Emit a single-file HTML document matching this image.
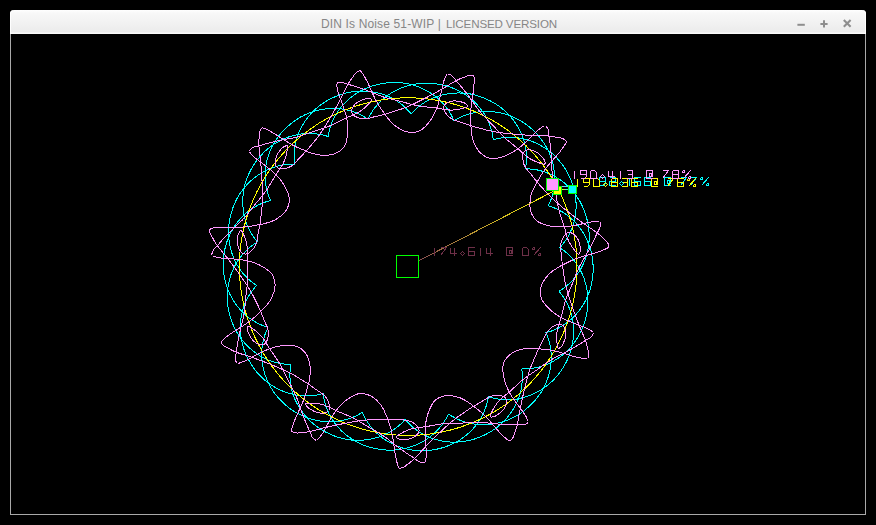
<!DOCTYPE html>
<html><head><meta charset="utf-8"><title>DIN Is Noise</title>
<style>
html,body{margin:0;padding:0;background:#000;}
body{width:876px;height:525px;position:relative;overflow:hidden;font-family:"Liberation Sans",sans-serif;}
#win{position:absolute;left:10px;top:10px;width:856px;height:505px;box-sizing:border-box;background:#000;border-radius:4px 4px 0 0;}
#tb{position:absolute;left:0;top:0;width:856px;height:24px;border-radius:4px 4px 0 0;box-shadow:inset 1px 0 0 #fff,inset -1px 0 0 #fff;background:linear-gradient(#ffffff 0px,#f8f8f8 3px,#ececec 21px,#ebebeb 22px,#fafafa 23px);}
#tt{position:absolute;left:311px;top:2px;height:24px;line-height:25px;font-size:12px;color:#868686;white-space:pre;}
#bd{position:absolute;left:0;top:24px;width:856px;height:481px;box-sizing:border-box;border:1px solid #a9a9a9;border-top:none;}
</style></head><body>
<div id="win"><div id="tb"></div><div id="tt"><span id="tts"><span style="position:absolute;left:0px;top:0;letter-spacing:0.14px">DIN Is Noise 51-WIP</span><span style="position:absolute;left:116.8px;top:0">|</span><span style="position:absolute;left:125.0px;top:-0.7px;font-size:11.6px;letter-spacing:-0.15px">LICENSED VERSION</span></span></div><div id="bd"></div></div>
<svg width="876" height="525" viewBox="0 0 876 525" style="position:absolute;left:0;top:0" shape-rendering="crispEdges" fill="none" stroke-width="1">
<g stroke="#00ffff"><path d="M411.1 113.9 L410.5 113.1 L409.8 112.3 L409.1 111.6 L408.5 110.8 L407.8 110.1 L407.1 109.4 L406.4 108.7 L405.7 108.0 L405.0 107.3 L404.3 106.7 L403.6 106.1 L402.9 105.4 L402.1 104.8 L401.4 104.3 L400.7 103.7 L399.9 103.1 L399.2 102.6 L398.4 102.1 L397.7 101.6 L396.9 101.1 L396.2 100.6 L395.4 100.1 L394.6 99.7 L393.9 99.2 L393.1 98.8 L392.3 98.4 L391.5 98.0 L390.7 97.6 L389.9 97.2 L389.2 96.9 L388.4 96.5 L387.6 96.2 L386.8 95.8 L386.0 95.5 L385.2 95.2 L384.4 94.9 L383.6 94.6 L382.8 94.4 L382.0 94.1 L381.1 93.9 L380.3 93.6 L379.5 93.4 L378.7 93.2 L377.9 93.0 L377.1 92.8 L376.3 92.6 L375.4 92.4 L374.6 92.3 L373.8 92.1 L373.0 92.0 L372.2 91.8 L371.3 91.7 L370.5 91.6 L369.7 91.5 L368.9 91.4 L368.1 91.4 L367.2 91.3 L366.4 91.2 L365.6 91.2 L364.8 91.1 L364.0 91.1 L363.1 91.1 L362.3 91.1 L361.5 91.1 L360.7 91.1 L359.9 91.1 L359.1 91.2 L358.2 91.2 L357.4 91.3 L356.6 91.3 L355.8 91.4 L355.0 91.5 L354.2 91.6 L353.4 91.7 L352.6 91.8 L351.8 91.9 L351.0 92.0 L350.2 92.2 L349.4 92.3 L348.6 92.5 L347.8 92.6 L347.0 92.8 L346.2 93.0 L345.4 93.2 L344.7 93.4 L343.9 93.6 L343.1 93.9 L342.3 94.1 L341.6 94.3 L340.8 94.6 L340.0 94.8 L339.3 95.1 L338.5 95.4 L337.8 95.7 L337.0 96.0 L336.3 96.3 L335.5 96.6 L334.8 96.9 L334.0 97.2 L333.3 97.6 L332.6 97.9 L331.8 98.2 L331.1 98.6 L330.4 98.9 L329.7 99.3 L328.9 99.7 L328.2 100.1 L327.5 100.5 L326.8 100.9 L326.1 101.3 L325.4 101.7 L324.8 102.1 L324.1 102.6 L323.4 103.0 L322.7 103.5 L322.1 103.9 L321.4 104.4 L320.7 104.9 L320.1 105.3 L319.5 105.8 L318.8 106.3 L318.2 106.8 L317.6 107.4 L316.9 107.9 L316.3 108.4 L315.7 109.0 L315.1 109.5 L314.5 110.1 L313.9 110.6 L313.3 111.2 L312.8 111.8 L312.2 112.4 L311.6 112.9 L311.1 113.5 L310.5 114.2 L310.0 114.8 L309.4 115.4 L308.9 116.0 L308.4 116.7 L307.9 117.3 L307.4 117.9 L306.9 118.6 L306.4 119.3 L305.9 119.9 L305.4 120.6 L304.9 121.3 L304.5 122.0 L304.0 122.7 L303.6 123.4 L303.2 124.1 L302.7 124.8 L302.3 125.6 L301.9 126.3 L301.5 127.0 L301.1 127.8 L300.7 128.5 L300.3 129.3 L300.0 130.0 L299.6 130.8 L299.3 131.6 L298.9 132.4 L298.6 133.2 L298.3 134.0 L298.0 134.8 L297.7 135.6 L297.4 136.4 L297.1 137.2 L296.8 138.1 L296.6 138.9 L296.3 139.7 L296.1 140.6 L295.9 141.4 L295.7 142.3 L295.5 143.2 L295.3 144.0 L295.1 144.9 L295.0 145.8 L294.8 146.7 L294.7 147.6 L294.6 148.5 L294.5 149.4 L294.4 150.4 L294.3 151.3 L294.2 152.2 L294.2 153.2 L294.1 154.1 L294.1 155.1 L294.1 156.0 L294.1 157.0 L294.1 158.0 L294.2 159.0 L294.3 160.0 L294.3 161.0 L294.4 162.0 L294.6 163.0 L294.7 164.0 L294.1 164.4 L293.1 164.4 L292.0 164.4 L291.0 164.4 L290.0 164.4 L289.0 164.4 L288.0 164.5 L287.1 164.6 L286.1 164.7 L285.1 164.8 L284.2 164.9 L283.2 165.0 L282.3 165.2 L281.4 165.4 L280.5 165.5 L279.6 165.7 L278.7 165.9 L277.8 166.2 L276.9 166.4 L276.0 166.6 L275.2 166.9 L274.3 167.2 L273.5 167.4 L272.6 167.7 L271.8 168.0 L271.0 168.3 L270.1 168.7 L269.3 169.0 L268.5 169.3 L267.7 169.7 L266.9 170.1 L266.2 170.4 L265.4 170.8 L264.6 171.2 L263.9 171.6 L263.1 172.0 L262.4 172.4 L261.6 172.9 L260.9 173.3 L260.2 173.8 L259.5 174.2 L258.8 174.7 L258.1 175.1 L257.4 175.6 L256.7 176.1 L256.0 176.6 L255.4 177.1 L254.7 177.6 L254.0 178.1 L253.4 178.7 L252.8 179.2 L252.1 179.7 L251.5 180.3 L250.9 180.8 L250.3 181.4 L249.7 182.0 L249.1 182.5 L248.5 183.1 L247.9 183.7 L247.4 184.3 L246.8 184.9 L246.3 185.5 L245.7 186.1 L245.2 186.7 L244.6 187.4 L244.1 188.0 L243.6 188.6 L243.1 189.3 L242.6 189.9 L242.1 190.6 L241.6 191.2 L241.2 191.9 L240.7 192.6 L240.3 193.2 L239.8 193.9 L239.4 194.6 L238.9 195.3 L238.5 196.0 L238.1 196.7 L237.7 197.4 L237.3 198.1 L236.9 198.8 L236.6 199.5 L236.2 200.2 L235.8 201.0 L235.5 201.7 L235.1 202.4 L234.8 203.1 L234.5 203.9 L234.2 204.6 L233.9 205.4 L233.6 206.1 L233.3 206.9 L233.0 207.6 L232.7 208.4 L232.5 209.2 L232.2 209.9 L232.0 210.7 L231.7 211.5 L231.5 212.2 L231.2 213.0 L231.0 213.8 L230.8 214.6 L230.6 215.3 L230.4 216.1 L230.2 216.9 L230.0 217.7 L229.9 218.5 L229.7 219.3 L229.6 220.1 L229.4 220.9 L229.3 221.7 L229.2 222.5 L229.1 223.3 L229.0 224.1 L228.9 224.9 L228.8 225.7 L228.7 226.5 L228.7 227.3 L228.6 228.1 L228.6 228.9 L228.5 229.7 L228.5 230.5 L228.5 231.3 L228.5 232.2 L228.5 233.0 L228.5 233.8 L228.5 234.6 L228.6 235.4 L228.6 236.2 L228.7 237.0 L228.7 237.9 L228.8 238.7 L228.9 239.5 L229.0 240.3 L229.1 241.1 L229.2 241.9 L229.3 242.7 L229.5 243.5 L229.6 244.4 L229.8 245.2 L229.9 246.0 L230.1 246.8 L230.3 247.6 L230.5 248.4 L230.7 249.2 L230.9 250.0 L231.1 250.8 L231.4 251.6 L231.6 252.4 L231.9 253.2 L232.2 254.0 L232.4 254.8 L232.7 255.6 L233.0 256.3 L233.3 257.1 L233.7 257.9 L234.0 258.7 L234.3 259.5 L234.7 260.2 L235.1 261.0 L235.5 261.8 L235.8 262.5 L236.2 263.3 L236.7 264.1 L237.1 264.8 L237.5 265.6 L238.0 266.3 L238.4 267.0 L238.9 267.8 L239.4 268.5 L239.9 269.2 L240.4 270.0 L240.9 270.7 L241.4 271.4 L242.0 272.1 L242.5 272.8 L243.1 273.5 L243.7 274.2 L244.3 274.9 L244.9 275.6 L245.6 276.3 L246.2 276.9 L246.9 277.6 L247.5 278.3 L248.2 278.9 L248.9 279.6 L249.7 280.2 L250.4 280.8 L251.2 281.4 L251.9 282.1 L252.7 282.7 L253.5 283.3 L254.3 283.9 L255.2 284.4 L256.0 285.0 L256.5 285.6 L255.8 286.4 L255.1 287.2 L254.4 287.9 L253.8 288.7 L253.2 289.5 L252.6 290.3 L252.0 291.1 L251.4 291.9 L250.9 292.6 L250.3 293.4 L249.8 294.2 L249.3 295.0 L248.8 295.9 L248.3 296.7 L247.9 297.5 L247.5 298.3 L247.0 299.1 L246.6 299.9 L246.2 300.7 L245.9 301.6 L245.5 302.4 L245.1 303.2 L244.8 304.0 L244.5 304.8 L244.2 305.7 L243.9 306.5 L243.6 307.3 L243.3 308.2 L243.1 309.0 L242.8 309.8 L242.6 310.7 L242.4 311.5 L242.2 312.3 L242.0 313.2 L241.8 314.0 L241.6 314.8 L241.4 315.7 L241.3 316.5 L241.2 317.4 L241.0 318.2 L240.9 319.0 L240.8 319.9 L240.7 320.7 L240.6 321.5 L240.6 322.4 L240.5 323.2 L240.4 324.0 L240.4 324.9 L240.4 325.7 L240.4 326.5 L240.4 327.4 L240.4 328.2 L240.4 329.0 L240.4 329.8 L240.4 330.7 L240.5 331.5 L240.5 332.3 L240.6 333.1 L240.6 334.0 L240.7 334.8 L240.8 335.6 L240.9 336.4 L241.0 337.2 L241.2 338.0 L241.3 338.8 L241.4 339.6 L241.6 340.4 L241.7 341.2 L241.9 342.0 L242.1 342.8 L242.3 343.6 L242.5 344.4 L242.7 345.2 L242.9 346.0 L243.1 346.8 L243.4 347.5 L243.6 348.3 L243.9 349.1 L244.1 349.8 L244.4 350.6 L244.7 351.4 L245.0 352.1 L245.3 352.9 L245.6 353.6 L245.9 354.4 L246.2 355.1 L246.6 355.8 L246.9 356.6 L247.3 357.3 L247.6 358.0 L248.0 358.7 L248.4 359.4 L248.8 360.1 L249.2 360.8 L249.6 361.5 L250.0 362.2 L250.4 362.9 L250.8 363.6 L251.2 364.3 L251.7 365.0 L252.1 365.7 L252.5 366.3 L253.0 367.0 L253.5 367.7 L253.9 368.3 L254.4 369.0 L254.9 369.6 L255.4 370.3 L255.9 370.9 L256.4 371.5 L256.9 372.2 L257.4 372.8 L257.9 373.4 L258.5 374.0 L259.0 374.6 L259.6 375.2 L260.1 375.8 L260.7 376.3 L261.3 376.9 L261.9 377.5 L262.4 378.0 L263.0 378.6 L263.6 379.1 L264.3 379.7 L264.9 380.2 L265.5 380.7 L266.1 381.2 L266.8 381.8 L267.4 382.3 L268.0 382.7 L268.7 383.2 L269.4 383.7 L270.0 384.2 L270.7 384.7 L271.4 385.1 L272.1 385.6 L272.8 386.0 L273.5 386.4 L274.2 386.8 L274.9 387.3 L275.6 387.7 L276.3 388.1 L277.1 388.5 L277.8 388.8 L278.5 389.2 L279.3 389.6 L280.0 389.9 L280.8 390.3 L281.6 390.6 L282.3 390.9 L283.1 391.3 L283.9 391.6 L284.7 391.9 L285.5 392.2 L286.2 392.4 L287.0 392.7 L287.9 393.0 L288.7 393.2 L289.5 393.5 L290.3 393.7 L291.1 393.9 L292.0 394.1 L292.8 394.3 L293.6 394.5 L294.5 394.7 L295.3 394.9 L296.2 395.0 L297.0 395.2 L297.9 395.3 L298.8 395.4 L299.6 395.5 L300.5 395.6 L301.4 395.7 L302.3 395.8 L303.2 395.8 L304.1 395.9 L305.0 395.9 L305.9 395.9 L306.8 395.9 L307.7 395.9 L308.7 395.9 L309.6 395.8 L310.5 395.8 L311.5 395.7 L312.4 395.6 L313.4 395.5 L314.3 395.4 L315.3 395.2 L316.2 395.1 L317.2 394.9 L318.2 394.7 L319.1 394.5 L320.1 394.3 L321.1 394.0 L322.1 393.8 L323.1 393.5 L323.3 394.4 L323.4 395.4 L323.6 396.4 L323.7 397.4 L323.9 398.4 L324.1 399.4 L324.3 400.3 L324.5 401.3 L324.8 402.2 L325.0 403.2 L325.3 404.1 L325.5 405.0 L325.8 405.9 L326.1 406.8 L326.4 407.6 L326.8 408.5 L327.1 409.4 L327.4 410.2 L327.8 411.1 L328.2 411.9 L328.5 412.7 L328.9 413.5 L329.3 414.3 L329.7 415.1 L330.2 415.9 L330.6 416.6 L331.0 417.4 L331.5 418.2 L331.9 418.9 L332.4 419.6 L332.9 420.4 L333.4 421.1 L333.9 421.8 L334.4 422.5 L334.9 423.2 L335.4 423.8 L335.9 424.5 L336.4 425.2 L337.0 425.8 L337.5 426.5 L338.1 427.1 L338.6 427.8 L339.2 428.4 L339.8 429.0 L340.4 429.6 L340.9 430.2 L341.5 430.8 L342.1 431.4 L342.7 431.9 L343.4 432.5 L344.0 433.0 L344.6 433.6 L345.2 434.1 L345.9 434.7 L346.5 435.2 L347.2 435.7 L347.8 436.2 L348.5 436.7 L349.1 437.2 L349.8 437.6 L350.5 438.1 L351.2 438.6 L351.8 439.0 L352.5 439.5 L353.2 439.9 L353.9 440.3 L354.6 440.7 L355.3 441.1 L356.1 441.5 L356.8 441.9 L357.5 442.3 L358.2 442.7 L358.9 443.0 L359.7 443.4 L360.4 443.7 L361.2 444.0 L361.9 444.4 L362.6 444.7 L363.4 445.0 L364.1 445.3 L364.9 445.6 L365.7 445.8 L366.4 446.1 L367.2 446.4 L368.0 446.6 L368.7 446.9 L369.5 447.1 L370.3 447.3 L371.1 447.5 L371.8 447.7 L372.6 447.9 L373.4 448.1 L374.2 448.3 L375.0 448.5 L375.8 448.6 L376.6 448.8 L377.4 448.9 L378.2 449.0 L379.0 449.2 L379.8 449.3 L380.6 449.4 L381.4 449.5 L382.2 449.6 L383.0 449.7 L383.8 449.8 L384.6 449.9 L385.4 449.9 L386.2 450.0 L387.0 450.0 L387.8 450.0 L388.6 450.1 L389.4 450.1 L390.2 450.1 L391.0 450.1 L391.8 450.1 L392.6 450.0 L393.4 450.0 L394.3 450.0 L395.1 449.9 L395.9 449.8 L396.7 449.8 L397.5 449.7 L398.3 449.6 L399.1 449.5 L399.9 449.4 L400.7 449.2 L401.5 449.1 L402.3 449.0 L403.1 448.8 L403.9 448.6 L404.7 448.5 L405.5 448.3 L406.3 448.1 L407.1 447.9 L407.9 447.7 L408.7 447.5 L409.5 447.2 L410.2 447.0 L411.0 446.7 L411.8 446.5 L412.6 446.2 L413.4 445.9 L414.1 445.6 L414.9 445.3 L415.7 445.0 L416.4 444.7 L417.2 444.3 L418.0 444.0 L418.7 443.7 L419.5 443.3 L420.2 442.9 L421.0 442.5 L421.7 442.1 L422.4 441.7 L423.2 441.3 L423.9 440.9 L424.6 440.5 L425.4 440.0 L426.1 439.6 L426.8 439.1 L427.5 438.6 L428.2 438.1 L428.9 437.6 L429.6 437.1 L430.3 436.6 L431.0 436.1 L431.6 435.5 L432.3 435.0 L433.0 434.4 L433.6 433.9 L434.3 433.3 L434.9 432.7 L435.6 432.1 L436.2 431.4 L436.9 430.8 L437.5 430.2 L438.1 429.5 L438.7 428.8 L439.3 428.1 L439.9 427.4 L440.5 426.7 L441.1 426.0 L441.6 425.3 L442.2 424.5 L442.8 423.8 L443.3 423.0 L443.8 422.2 L444.4 421.4 L444.9 420.5 L445.4 419.7 L445.9 418.9 L446.4 418.0 L446.8 417.1 L447.3 416.2 L447.8 415.3 L448.2 414.3 L448.9 414.2 L449.7 414.8 L450.6 415.4 L451.4 415.9 L452.3 416.4 L453.2 416.9 L454.0 417.4 L454.9 417.9 L455.7 418.3 L456.6 418.8 L457.5 419.2 L458.3 419.6 L459.2 419.9 L460.1 420.3 L460.9 420.6 L461.8 421.0 L462.7 421.3 L463.5 421.6 L464.4 421.9 L465.3 422.1 L466.1 422.4 L467.0 422.6 L467.9 422.8 L468.7 423.1 L469.6 423.3 L470.5 423.4 L471.3 423.6 L472.2 423.8 L473.0 423.9 L473.9 424.0 L474.8 424.2 L475.6 424.3 L476.5 424.4 L477.3 424.5 L478.2 424.5 L479.0 424.6 L479.9 424.6 L480.7 424.7 L481.6 424.7 L482.4 424.7 L483.3 424.7 L484.1 424.7 L485.0 424.7 L485.8 424.7 L486.6 424.6 L487.5 424.6 L488.3 424.5 L489.1 424.4 L490.0 424.4 L490.8 424.3 L491.6 424.2 L492.5 424.1 L493.3 423.9 L494.1 423.8 L494.9 423.7 L495.7 423.5 L496.5 423.4 L497.3 423.2 L498.1 423.0 L498.9 422.8 L499.7 422.6 L500.5 422.4 L501.3 422.2 L502.1 421.9 L502.9 421.7 L503.7 421.5 L504.4 421.2 L505.2 420.9 L506.0 420.7 L506.7 420.4 L507.5 420.1 L508.3 419.8 L509.0 419.5 L509.7 419.2 L510.5 418.8 L511.2 418.5 L512.0 418.1 L512.7 417.8 L513.4 417.4 L514.1 417.0 L514.8 416.7 L515.6 416.3 L516.3 415.9 L517.0 415.5 L517.7 415.1 L518.3 414.6 L519.0 414.2 L519.7 413.8 L520.4 413.3 L521.0 412.9 L521.7 412.4 L522.4 411.9 L523.0 411.5 L523.7 411.0 L524.3 410.5 L524.9 410.0 L525.6 409.5 L526.2 409.0 L526.8 408.4 L527.4 407.9 L528.0 407.4 L528.6 406.9 L529.2 406.3 L529.8 405.8 L530.4 405.2 L531.0 404.7 L531.6 404.1 L532.1 403.5 L532.7 403.0 L533.3 402.4 L533.8 401.8 L534.4 401.2 L534.9 400.6 L535.4 400.0 L535.9 399.3 L536.5 398.7 L537.0 398.1 L537.5 397.4 L537.9 396.8 L538.4 396.1 L538.9 395.5 L539.4 394.8 L539.8 394.2 L540.3 393.5 L540.7 392.8 L541.2 392.1 L541.6 391.4 L542.0 390.7 L542.4 390.0 L542.8 389.3 L543.2 388.6 L543.6 387.9 L544.0 387.2 L544.4 386.4 L544.7 385.7 L545.1 384.9 L545.4 384.2 L545.7 383.5 L546.1 382.7 L546.4 381.9 L546.7 381.2 L547.0 380.4 L547.3 379.6 L547.6 378.8 L547.8 378.1 L548.1 377.3 L548.3 376.5 L548.6 375.7 L548.8 374.9 L549.0 374.1 L549.3 373.3 L549.5 372.5 L549.6 371.6 L549.8 370.8 L550.0 370.0 L550.2 369.2 L550.3 368.3 L550.5 367.5 L550.6 366.7 L550.7 365.8 L550.8 365.0 L550.9 364.1 L551.0 363.3 L551.1 362.4 L551.1 361.6 L551.2 360.7 L551.2 359.8 L551.3 359.0 L551.3 358.1 L551.3 357.2 L551.3 356.3 L551.2 355.5 L551.2 354.6 L551.2 353.7 L551.1 352.8 L551.0 351.9 L550.9 351.0 L550.8 350.1 L550.7 349.2 L550.6 348.3 L550.4 347.4 L550.3 346.5 L550.1 345.6 L549.9 344.7 L549.7 343.7 L549.4 342.8 L549.2 341.9 L548.9 341.0 L548.7 340.0 L548.4 339.1 L548.1 338.2 L547.7 337.2 L547.4 336.3 L547.0 335.3 L546.6 334.4 L546.2 333.5 L546.0 332.6 L547.0 332.4 L548.0 332.1 L549.0 331.8 L550.0 331.5 L550.9 331.2 L551.8 330.9 L552.8 330.5 L553.7 330.2 L554.6 329.8 L555.4 329.4 L556.3 329.0 L557.2 328.6 L558.0 328.2 L558.9 327.8 L559.7 327.3 L560.5 326.9 L561.3 326.4 L562.1 326.0 L562.8 325.5 L563.6 325.0 L564.3 324.5 L565.1 324.0 L565.8 323.5 L566.5 323.0 L567.2 322.5 L567.9 321.9 L568.6 321.4 L569.3 320.8 L570.0 320.3 L570.6 319.7 L571.3 319.1 L571.9 318.5 L572.5 317.9 L573.2 317.3 L573.8 316.7 L574.4 316.1 L575.0 315.5 L575.5 314.9 L576.1 314.3 L576.7 313.6 L577.2 313.0 L577.8 312.4 L578.3 311.7 L578.8 311.0 L579.3 310.4 L579.8 309.7 L580.3 309.0 L580.8 308.4 L581.3 307.7 L581.8 307.0 L582.2 306.3 L582.7 305.6 L583.1 304.9 L583.5 304.2 L583.9 303.5 L584.4 302.8 L584.8 302.0 L585.2 301.3 L585.5 300.6 L585.9 299.9 L586.3 299.1 L586.6 298.4 L587.0 297.6 L587.3 296.9 L587.6 296.1 L588.0 295.4 L588.3 294.6 L588.6 293.9 L588.8 293.1 L589.1 292.3 L589.4 291.6 L589.7 290.8 L589.9 290.0 L590.1 289.3 L590.4 288.5 L590.6 287.7 L590.8 286.9 L591.0 286.1 L591.2 285.4 L591.4 284.6 L591.6 283.8 L591.7 283.0 L591.9 282.2 L592.0 281.4 L592.2 280.6 L592.3 279.8 L592.4 279.0 L592.5 278.2 L592.6 277.4 L592.7 276.6 L592.8 275.8 L592.8 275.0 L592.9 274.2 L593.0 273.4 L593.0 272.6 L593.0 271.8 L593.0 271.0 L593.1 270.1 L593.1 269.3 L593.1 268.5 L593.1 267.7 L593.1 266.9 L593.1 266.1 L593.0 265.3 L593.0 264.5 L592.9 263.7 L592.9 262.9 L592.8 262.1 L592.7 261.3 L592.7 260.5 L592.6 259.7 L592.5 258.9 L592.3 258.1 L592.2 257.3 L592.1 256.5 L591.9 255.7 L591.8 254.9 L591.6 254.1 L591.5 253.3 L591.3 252.5 L591.1 251.7 L590.9 250.9 L590.7 250.2 L590.4 249.4 L590.2 248.6 L590.0 247.8 L589.7 247.0 L589.5 246.3 L589.2 245.5 L588.9 244.7 L588.6 244.0 L588.3 243.2 L588.0 242.4 L587.7 241.7 L587.4 240.9 L587.1 240.2 L586.7 239.4 L586.4 238.7 L586.0 238.0 L585.6 237.2 L585.2 236.5 L584.8 235.8 L584.4 235.0 L584.0 234.3 L583.6 233.6 L583.2 232.9 L582.7 232.2 L582.3 231.5 L581.8 230.8 L581.4 230.1 L580.9 229.4 L580.4 228.7 L579.9 228.1 L579.4 227.4 L578.9 226.7 L578.4 226.1 L577.8 225.4 L577.3 224.8 L576.7 224.1 L576.2 223.5 L575.6 222.8 L575.0 222.2 L574.4 221.6 L573.8 221.0 L573.2 220.4 L572.6 219.8 L571.9 219.2 L571.3 218.6 L570.6 218.0 L570.0 217.5 L569.3 216.9 L568.6 216.3 L567.9 215.8 L567.2 215.3 L566.5 214.7 L565.7 214.2 L565.0 213.7 L564.2 213.2 L563.5 212.7 L562.7 212.2 L561.9 211.7 L561.1 211.3 L560.3 210.8 L559.4 210.4 L558.6 209.9 L557.8 209.5 L556.9 209.1 L556.0 208.7 L555.1 208.3 L554.2 207.9 L553.3 207.5 L552.4 207.2 L551.4 206.8 L550.4 206.5 L549.5 206.2 L548.5 205.9 L548.7 205.1 L549.1 204.2 L549.5 203.2 L549.9 202.3 L550.3 201.4 L550.7 200.5 L551.0 199.5 L551.4 198.6 L551.7 197.7 L552.0 196.8 L552.3 195.9 L552.5 195.0 L552.8 194.0 L553.0 193.1 L553.2 192.2 L553.4 191.3 L553.6 190.4 L553.8 189.5 L553.9 188.6 L554.1 187.7 L554.2 186.8 L554.3 186.0 L554.4 185.1 L554.5 184.2 L554.5 183.3 L554.6 182.4 L554.6 181.5 L554.7 180.7 L554.7 179.8 L554.7 178.9 L554.7 178.1 L554.7 177.2 L554.6 176.3 L554.6 175.5 L554.5 174.6 L554.5 173.8 L554.4 172.9 L554.3 172.1 L554.2 171.2 L554.1 170.4 L554.0 169.6 L553.9 168.7 L553.7 167.9 L553.6 167.1 L553.4 166.2 L553.2 165.4 L553.1 164.6 L552.9 163.8 L552.7 163.0 L552.5 162.2 L552.2 161.4 L552.0 160.6 L551.8 159.8 L551.5 159.0 L551.3 158.2 L551.0 157.4 L550.7 156.7 L550.4 155.9 L550.1 155.1 L549.8 154.4 L549.5 153.6 L549.2 152.8 L548.9 152.1 L548.5 151.3 L548.2 150.6 L547.8 149.9 L547.4 149.1 L547.1 148.4 L546.7 147.7 L546.3 147.0 L545.9 146.3 L545.5 145.6 L545.1 144.9 L544.6 144.2 L544.2 143.5 L543.8 142.8 L543.3 142.1 L542.8 141.5 L542.4 140.8 L541.9 140.2 L541.4 139.5 L540.9 138.9 L540.4 138.2 L539.9 137.6 L539.4 137.0 L538.9 136.3 L538.4 135.7 L537.9 135.1 L537.3 134.5 L536.8 133.9 L536.2 133.3 L535.7 132.8 L535.1 132.2 L534.5 131.6 L533.9 131.1 L533.4 130.5 L532.8 130.0 L532.2 129.4 L531.6 128.9 L531.0 128.3 L530.4 127.8 L529.7 127.3 L529.1 126.8 L528.5 126.3 L527.9 125.8 L527.2 125.3 L526.6 124.8 L525.9 124.3 L525.3 123.8 L524.6 123.4 L523.9 122.9 L523.3 122.5 L522.6 122.0 L521.9 121.6 L521.2 121.2 L520.5 120.7 L519.8 120.3 L519.1 119.9 L518.4 119.5 L517.7 119.2 L517.0 118.8 L516.3 118.4 L515.5 118.1 L514.8 117.7 L514.1 117.4 L513.3 117.0 L512.6 116.7 L511.8 116.4 L511.1 116.1 L510.3 115.8 L509.5 115.5 L508.8 115.2 L508.0 115.0 L507.2 114.7 L506.4 114.5 L505.7 114.2 L504.9 114.0 L504.1 113.8 L503.3 113.6 L502.5 113.4 L501.7 113.2 L500.9 113.0 L500.1 112.8 L499.3 112.6 L498.4 112.5 L497.6 112.3 L496.8 112.2 L496.0 112.1 L495.1 112.0 L494.3 111.9 L493.5 111.8 L492.7 111.7 L491.8 111.6 L491.0 111.6 L490.1 111.5 L489.3 111.5 L488.5 111.4 L487.6 111.4 L486.8 111.4 L485.9 111.4 L485.1 111.4 L484.2 111.5 L483.3 111.5 L482.5 111.6 L481.6 111.6 L480.8 111.7 L479.9 111.8 L479.0 111.9 L478.2 112.0 L477.3 112.1 L476.4 112.3 L475.6 112.4 L474.7 112.6 L473.8 112.8 L472.9 113.0 L472.1 113.2 L471.2 113.4 L470.3 113.6 L469.4 113.9 L468.6 114.1 L467.7 114.4 L466.8 114.7 L465.9 115.0 L465.1 115.3 L464.2 115.7 L463.3 116.0 L462.4 116.4 L461.5 116.8 L460.7 117.2 L459.8 117.7 L458.9 118.1 L458.0 118.6 L457.1 119.1 L456.3 119.6 L455.4 120.1 L454.5 120.6 L453.8 120.5 L453.4 119.6 L453.0 118.6 L452.6 117.7 L452.1 116.8 L451.7 115.9 L451.2 115.0 L450.8 114.2 L450.3 113.3 L449.8 112.5 L449.3 111.7 L448.8 110.9 L448.2 110.1 L447.7 109.3 L447.2 108.6 L446.6 107.8 L446.1 107.1 L445.5 106.4 L444.9 105.7 L444.3 105.0 L443.7 104.3 L443.1 103.6 L442.5 103.0 L441.9 102.3 L441.3 101.7 L440.7 101.1 L440.0 100.4 L439.4 99.8 L438.8 99.3 L438.1 98.7 L437.5 98.1 L436.8 97.6 L436.1 97.0 L435.4 96.5 L434.8 95.9 L434.1 95.4 L433.4 94.9 L432.7 94.4 L432.0 94.0 L431.3 93.5 L430.6 93.0 L429.9 92.6 L429.2 92.1 L428.4 91.7 L427.7 91.3 L427.0 90.9 L426.2 90.5 L425.5 90.1 L424.8 89.7 L424.0 89.3 L423.3 89.0 L422.5 88.6 L421.8 88.3 L421.0 87.9 L420.2 87.6 L419.5 87.3 L418.7 87.0 L417.9 86.7 L417.2 86.4 L416.4 86.2 L415.6 85.9 L414.8 85.6 L414.1 85.4 L413.3 85.2 L412.5 84.9 L411.7 84.7 L410.9 84.5 L410.1 84.3 L409.3 84.1 L408.5 84.0 L407.7 83.8 L406.9 83.7 L406.1 83.5 L405.3 83.4 L404.5 83.3 L403.7 83.1 L402.9 83.0 L402.1 82.9 L401.3 82.8 L400.5 82.8 L399.7 82.7 L398.9 82.6 L398.1 82.6 L397.3 82.6 L396.5 82.5 L395.7 82.5 L394.8 82.5 L394.0 82.5 L393.2 82.5 L392.4 82.5 L391.6 82.6 L390.8 82.6 L390.0 82.7 L389.2 82.7 L388.4 82.8 L387.6 82.9 L386.8 82.9 L386.0 83.0 L385.2 83.1 L384.4 83.2 L383.6 83.4 L382.8 83.5 L382.0 83.6 L381.2 83.7 L380.4 83.9 L379.6 84.0 L378.8 84.2 L378.0 84.4 L377.2 84.6 L376.5 84.7 L375.7 85.0 L374.9 85.2 L374.1 85.4 L373.3 85.6 L372.6 85.8 L371.8 86.1 L371.0 86.4 L370.3 86.6 L369.5 86.9 L368.8 87.2 L368.0 87.5 L367.2 87.8 L366.5 88.1 L365.8 88.4 L365.0 88.8 L364.3 89.1 L363.5 89.4 L362.8 89.8 L362.1 90.2 L361.4 90.5 L360.6 90.9 L359.9 91.3 L359.2 91.7 L358.5 92.1 L357.8 92.6 L357.1 93.0 L356.4 93.4 L355.7 93.9 L355.0 94.4 L354.4 94.8 L353.7 95.3 L353.0 95.8 L352.4 96.3 L351.7 96.8 L351.1 97.3 L350.4 97.8 L349.8 98.3 L349.1 98.9 L348.5 99.4 L347.9 100.0 L347.3 100.5 L346.7 101.1 L346.1 101.7 L345.5 102.3 L344.9 102.9 L344.3 103.5 L343.7 104.1 L343.1 104.7 L342.6 105.4 L342.0 106.0 L341.5 106.7 L340.9 107.3 L340.4 108.0 L339.9 108.7 L339.3 109.4 L338.8 110.1 L338.3 110.8 L337.8 111.5 L337.4 112.2 L336.9 112.9 L336.4 113.7 L336.0 114.4 L335.5 115.2 L335.1 116.0 L334.6 116.8 L334.2 117.6 L333.8 118.4 L333.4 119.2 L333.0 120.0 L332.6 120.8 L332.3 121.7 L331.9 122.5 L331.6 123.4 L331.2 124.3 L330.9 125.1 L330.6 126.0 L330.3 126.9 L330.0 127.9 L329.8 128.8 L329.5 129.7 L329.3 130.7 L329.0 131.7 L328.8 132.6 L328.6 133.6 L328.4 134.6 L328.3 135.7 L328.0 136.6 L327.1 136.2 L326.1 135.9 L325.1 135.6 L324.1 135.4 L323.1 135.1 L322.2 134.9 L321.2 134.7 L320.3 134.5 L319.3 134.3 L318.4 134.2 L317.4 134.0 L316.5 133.9 L315.6 133.8 L314.6 133.7 L313.7 133.6 L312.8 133.6 L311.9 133.5 L310.9 133.5 L310.0 133.5 L309.1 133.4 L308.2 133.5 L307.3 133.5 L306.4 133.5 L305.6 133.6 L304.7 133.6 L303.8 133.7 L302.9 133.8 L302.1 133.9 L301.2 134.0 L300.3 134.1 L299.5 134.2 L298.6 134.4 L297.8 134.5 L296.9 134.7 L296.1 134.9 L295.3 135.1 L294.4 135.3 L293.6 135.5 L292.8 135.7 L292.0 135.9 L291.2 136.2 L290.4 136.4 L289.6 136.7 L288.8 136.9 L288.0 137.2 L287.2 137.5 L286.4 137.8 L285.6 138.1 L284.9 138.4 L284.1 138.8 L283.3 139.1 L282.6 139.4 L281.8 139.8 L281.1 140.2 L280.4 140.5 L279.6 140.9 L278.9 141.3 L278.2 141.7 L277.5 142.1 L276.7 142.5 L276.0 142.9 L275.3 143.4 L274.7 143.8 L274.0 144.2 L273.3 144.7 L272.6 145.2 L271.9 145.6 L271.3 146.1 L270.6 146.6 L270.0 147.1 L269.3 147.6 L268.7 148.1 L268.1 148.6 L267.4 149.1 L266.8 149.7 L266.2 150.2 L265.6 150.7 L265.0 151.3 L264.4 151.8 L263.9 152.4 L263.3 153.0 L262.7 153.5 L262.2 154.1 L261.6 154.7 L261.1 155.3 L260.5 155.9 L260.0 156.5 L259.5 157.1 L259.0 157.8 L258.4 158.4 L257.9 159.0 L257.4 159.7 L257.0 160.3 L256.5 161.0 L256.0 161.6 L255.5 162.3 L255.1 162.9 L254.6 163.6 L254.2 164.3 L253.7 165.0 L253.3 165.6 L252.9 166.3 L252.5 167.0 L252.1 167.7 L251.7 168.4 L251.3 169.1 L250.9 169.8 L250.5 170.5 L250.1 171.2 L249.8 172.0 L249.4 172.7 L249.1 173.4 L248.7 174.1 L248.4 174.9 L248.1 175.6 L247.8 176.4 L247.5 177.1 L247.2 177.9 L246.9 178.6 L246.6 179.4 L246.3 180.2 L246.1 180.9 L245.8 181.7 L245.6 182.5 L245.4 183.3 L245.1 184.1 L244.9 184.8 L244.7 185.6 L244.5 186.4 L244.4 187.2 L244.2 188.0 L244.0 188.8 L243.9 189.6 L243.7 190.4 L243.6 191.2 L243.5 192.0 L243.4 192.9 L243.3 193.7 L243.2 194.5 L243.1 195.3 L243.0 196.1 L242.9 197.0 L242.9 197.8 L242.8 198.6 L242.8 199.4 L242.8 200.3 L242.8 201.1 L242.8 201.9 L242.8 202.8 L242.8 203.6 L242.8 204.4 L242.9 205.3 L242.9 206.1 L243.0 207.0 L243.1 207.8 L243.1 208.6 L243.2 209.5 L243.3 210.3 L243.5 211.2 L243.6 212.0 L243.7 212.8 L243.9 213.7 L244.0 214.5 L244.2 215.4 L244.4 216.2 L244.6 217.1 L244.8 217.9 L245.0 218.7 L245.3 219.6 L245.5 220.4 L245.8 221.3 L246.1 222.1 L246.4 222.9 L246.7 223.8 L247.0 224.6 L247.3 225.4 L247.7 226.3 L248.0 227.1 L248.4 227.9 L248.8 228.8 L249.2 229.6 L249.6 230.4 L250.1 231.3 L250.5 232.1 L251.0 232.9 L251.5 233.7 L252.0 234.5 L252.5 235.3 L253.0 236.2 L253.6 237.0 L254.2 237.8 L254.8 238.6 L255.4 239.4 L256.0 240.2 L256.7 241.0 L257.3 241.8 L256.9 242.4 L256.0 242.9 L255.1 243.4 L254.3 244.0 L253.4 244.6 L252.6 245.2 L251.8 245.7 L251.1 246.3 L250.3 246.9 L249.6 247.5 L248.8 248.2 L248.1 248.8 L247.4 249.4 L246.7 250.1 L246.1 250.7 L245.4 251.4 L244.8 252.0 L244.1 252.7 L243.5 253.3 L242.9 254.0 L242.3 254.7 L241.7 255.4 L241.2 256.1 L240.6 256.8 L240.1 257.5 L239.6 258.2 L239.1 258.9 L238.6 259.6 L238.1 260.4 L237.6 261.1 L237.1 261.8 L236.7 262.6 L236.2 263.3 L235.8 264.0 L235.4 264.8 L235.0 265.5 L234.6 266.3 L234.2 267.1 L233.8 267.8 L233.5 268.6 L233.1 269.4 L232.8 270.1 L232.4 270.9 L232.1 271.7 L231.8 272.5 L231.5 273.2 L231.2 274.0 L230.9 274.8 L230.7 275.6 L230.4 276.4 L230.2 277.2 L229.9 278.0 L229.7 278.8 L229.5 279.6 L229.3 280.4 L229.1 281.2 L228.9 282.0 L228.7 282.8 L228.5 283.6 L228.4 284.4 L228.2 285.2 L228.1 286.0 L228.0 286.8 L227.9 287.6 L227.8 288.4 L227.7 289.2 L227.6 290.1 L227.5 290.9 L227.4 291.7 L227.4 292.5 L227.3 293.3 L227.3 294.1 L227.3 294.9 L227.2 295.7 L227.2 296.6 L227.2 297.4 L227.3 298.2 L227.3 299.0 L227.3 299.8 L227.4 300.6 L227.4 301.4 L227.5 302.2 L227.5 303.0 L227.6 303.8 L227.7 304.6 L227.8 305.4 L227.9 306.2 L228.0 307.0 L228.2 307.8 L228.3 308.6 L228.4 309.4 L228.6 310.2 L228.8 311.0 L228.9 311.8 L229.1 312.6 L229.3 313.4 L229.5 314.1 L229.7 314.9 L229.9 315.7 L230.2 316.5 L230.4 317.3 L230.6 318.0 L230.9 318.8 L231.1 319.6 L231.4 320.3 L231.6 321.1 L231.9 321.8 L232.2 322.6 L232.5 323.4 L232.8 324.1 L233.1 324.8 L233.4 325.6 L233.8 326.3 L234.1 327.1 L234.5 327.8 L234.8 328.5 L235.2 329.2 L235.6 330.0 L235.9 330.7 L236.3 331.4 L236.7 332.1 L237.1 332.8 L237.6 333.5 L238.0 334.2 L238.4 334.8 L238.9 335.5 L239.3 336.2 L239.8 336.9 L240.3 337.5 L240.7 338.2 L241.2 338.9 L241.7 339.5 L242.2 340.1 L242.7 340.8 L243.3 341.4 L243.8 342.0 L244.3 342.7 L244.9 343.3 L245.4 343.9 L246.0 344.5 L246.6 345.1 L247.1 345.7 L247.7 346.3 L248.3 346.8 L248.9 347.4 L249.5 348.0 L250.1 348.5 L250.8 349.1 L251.4 349.6 L252.0 350.2 L252.7 350.7 L253.3 351.2 L254.0 351.7 L254.7 352.2 L255.4 352.7 L256.0 353.2 L256.7 353.7 L257.4 354.2 L258.2 354.6 L258.9 355.1 L259.6 355.5 L260.3 356.0 L261.1 356.4 L261.8 356.8 L262.6 357.2 L263.3 357.6 L264.1 358.0 L264.9 358.4 L265.7 358.8 L266.5 359.2 L267.3 359.5 L268.1 359.9 L268.9 360.2 L269.7 360.5 L270.6 360.8 L271.4 361.1 L272.3 361.4 L273.1 361.7 L274.0 362.0 L274.9 362.2 L275.8 362.4 L276.7 362.7 L277.6 362.9 L278.5 363.1 L279.4 363.3 L280.4 363.5 L281.3 363.6 L282.3 363.8 L283.2 363.9 L284.2 364.0 L285.2 364.1 L286.2 364.2 L287.2 364.3 L288.2 364.3 L289.2 364.3 L290.2 364.4 L290.8 364.7 L290.7 365.7 L290.5 366.8 L290.4 367.8 L290.2 368.8 L290.1 369.8 L290.1 370.8 L290.0 371.7 L289.9 372.7 L289.9 373.7 L289.9 374.6 L289.9 375.6 L289.9 376.5 L289.9 377.5 L290.0 378.4 L290.0 379.3 L290.1 380.2 L290.2 381.2 L290.3 382.1 L290.4 383.0 L290.5 383.9 L290.7 384.7 L290.8 385.6 L291.0 386.5 L291.2 387.4 L291.4 388.2 L291.6 389.1 L291.8 389.9 L292.0 390.8 L292.2 391.6 L292.5 392.5 L292.7 393.3 L293.0 394.1 L293.3 394.9 L293.6 395.7 L293.9 396.5 L294.2 397.3 L294.5 398.1 L294.8 398.9 L295.1 399.7 L295.5 400.4 L295.8 401.2 L296.2 402.0 L296.6 402.7 L297.0 403.5 L297.4 404.2 L297.8 404.9 L298.2 405.7 L298.6 406.4 L299.0 407.1 L299.4 407.8 L299.9 408.5 L300.3 409.2 L300.8 409.9 L301.3 410.6 L301.7 411.3 L302.2 411.9 L302.7 412.6 L303.2 413.3 L303.7 413.9 L304.2 414.6 L304.7 415.2 L305.3 415.8 L305.8 416.4 L306.3 417.0 L306.9 417.7 L307.4 418.3 L308.0 418.8 L308.6 419.4 L309.1 420.0 L309.7 420.6 L310.3 421.1 L310.9 421.7 L311.5 422.2 L312.1 422.8 L312.7 423.3 L313.3 423.8 L314.0 424.4 L314.6 424.9 L315.2 425.4 L315.9 425.9 L316.5 426.3 L317.2 426.8 L317.8 427.3 L318.5 427.7 L319.2 428.2 L319.8 428.6 L320.5 429.1 L321.2 429.5 L321.9 429.9 L322.6 430.3 L323.3 430.7 L324.0 431.1 L324.7 431.5 L325.4 431.9 L326.1 432.3 L326.9 432.6 L327.6 433.0 L328.3 433.3 L329.0 433.7 L329.8 434.0 L330.5 434.4 L331.2 434.7 L332.0 435.0 L332.7 435.3 L333.5 435.6 L334.2 435.9 L335.0 436.2 L335.8 436.5 L336.5 436.7 L337.3 437.0 L338.1 437.2 L338.8 437.5 L339.6 437.7 L340.4 437.9 L341.2 438.1 L341.9 438.3 L342.7 438.5 L343.5 438.7 L344.3 438.8 L345.1 439.0 L345.9 439.2 L346.7 439.3 L347.5 439.4 L348.3 439.6 L349.1 439.7 L349.9 439.8 L350.7 439.9 L351.5 440.0 L352.4 440.0 L353.2 440.1 L354.0 440.1 L354.8 440.2 L355.6 440.2 L356.4 440.2 L357.3 440.3 L358.1 440.3 L358.9 440.3 L359.7 440.2 L360.5 440.2 L361.4 440.2 L362.2 440.1 L363.0 440.1 L363.8 440.0 L364.7 439.9 L365.5 439.8 L366.3 439.7 L367.1 439.6 L368.0 439.5 L368.8 439.4 L369.6 439.2 L370.4 439.1 L371.3 438.9 L372.1 438.8 L372.9 438.6 L373.7 438.4 L374.5 438.2 L375.4 438.0 L376.2 437.7 L377.0 437.5 L377.8 437.2 L378.6 437.0 L379.4 436.7 L380.2 436.4 L381.0 436.1 L381.9 435.8 L382.7 435.5 L383.5 435.2 L384.3 434.8 L385.1 434.5 L385.9 434.1 L386.6 433.7 L387.4 433.3 L388.2 432.9 L389.0 432.5 L389.8 432.0 L390.6 431.6 L391.3 431.1 L392.1 430.6 L392.9 430.1 L393.7 429.6 L394.4 429.1 L395.2 428.6 L395.9 428.0 L396.7 427.4 L397.4 426.9 L398.2 426.3 L398.9 425.6 L399.6 425.0 L400.3 424.3 L401.1 423.7 L401.8 423.0 L402.5 422.3 L403.2 421.6 L403.9 420.8 L404.6 420.0 L405.3 419.3 L405.9 420.1 L406.6 420.9 L407.3 421.6 L407.9 422.4 L408.6 423.1 L409.3 423.8 L410.0 424.5 L410.7 425.2 L411.4 425.9 L412.1 426.5 L412.8 427.1 L413.5 427.8 L414.3 428.4 L415.0 428.9 L415.7 429.5 L416.5 430.1 L417.2 430.6 L418.0 431.1 L418.7 431.6 L419.5 432.1 L420.2 432.6 L421.0 433.1 L421.8 433.5 L422.5 434.0 L423.3 434.4 L424.1 434.8 L424.9 435.2 L425.7 435.6 L426.5 436.0 L427.2 436.3 L428.0 436.7 L428.8 437.0 L429.6 437.4 L430.4 437.7 L431.2 438.0 L432.0 438.3 L432.8 438.6 L433.6 438.8 L434.4 439.1 L435.3 439.3 L436.1 439.6 L436.9 439.8 L437.7 440.0 L438.5 440.2 L439.3 440.4 L440.1 440.6 L441.0 440.8 L441.8 440.9 L442.6 441.1 L443.4 441.2 L444.2 441.4 L445.1 441.5 L445.9 441.6 L446.7 441.7 L447.5 441.8 L448.3 441.8 L449.2 441.9 L450.0 442.0 L450.8 442.0 L451.6 442.1 L452.4 442.1 L453.3 442.1 L454.1 442.1 L454.9 442.1 L455.7 442.1 L456.5 442.1 L457.3 442.0 L458.2 442.0 L459.0 441.9 L459.8 441.9 L460.6 441.8 L461.4 441.7 L462.2 441.6 L463.0 441.5 L463.8 441.4 L464.6 441.3 L465.4 441.2 L466.2 441.0 L467.0 440.9 L467.8 440.7 L468.6 440.6 L469.4 440.4 L470.2 440.2 L471.0 440.0 L471.7 439.8 L472.5 439.6 L473.3 439.3 L474.1 439.1 L474.8 438.9 L475.6 438.6 L476.4 438.4 L477.1 438.1 L477.9 437.8 L478.6 437.5 L479.4 437.2 L480.1 436.9 L480.9 436.6 L481.6 436.3 L482.4 436.0 L483.1 435.6 L483.8 435.3 L484.6 435.0 L485.3 434.6 L486.0 434.3 L486.7 433.9 L487.5 433.5 L488.2 433.1 L488.9 432.7 L489.6 432.3 L490.3 431.9 L491.0 431.5 L491.6 431.1 L492.3 430.6 L493.0 430.2 L493.7 429.7 L494.3 429.3 L495.0 428.8 L495.7 428.3 L496.3 427.9 L496.9 427.4 L497.6 426.9 L498.2 426.4 L498.8 425.8 L499.5 425.3 L500.1 424.8 L500.7 424.2 L501.3 423.7 L501.9 423.1 L502.5 422.6 L503.1 422.0 L503.6 421.4 L504.2 420.8 L504.8 420.3 L505.3 419.7 L505.9 419.0 L506.4 418.4 L507.0 417.8 L507.5 417.2 L508.0 416.5 L508.5 415.9 L509.0 415.3 L509.5 414.6 L510.0 413.9 L510.5 413.3 L511.0 412.6 L511.5 411.9 L511.9 411.2 L512.4 410.5 L512.8 409.8 L513.2 409.1 L513.7 408.4 L514.1 407.6 L514.5 406.9 L514.9 406.2 L515.3 405.4 L515.7 404.7 L516.1 403.9 L516.4 403.2 L516.8 402.4 L517.1 401.6 L517.5 400.8 L517.8 400.0 L518.1 399.2 L518.4 398.4 L518.7 397.6 L519.0 396.8 L519.3 396.0 L519.6 395.1 L519.8 394.3 L520.1 393.5 L520.3 392.6 L520.5 391.8 L520.7 390.9 L520.9 390.0 L521.1 389.2 L521.3 388.3 L521.4 387.4 L521.6 386.5 L521.7 385.6 L521.8 384.7 L521.9 383.8 L522.0 382.8 L522.1 381.9 L522.2 381.0 L522.2 380.0 L522.3 379.1 L522.3 378.1 L522.3 377.2 L522.3 376.2 L522.3 375.2 L522.2 374.2 L522.1 373.2 L522.1 372.2 L522.0 371.2 L521.8 370.2 L521.7 369.2 L522.3 368.8 L523.3 368.8 L524.4 368.8 L525.4 368.8 L526.4 368.8 L527.4 368.8 L528.4 368.7 L529.3 368.6 L530.3 368.5 L531.3 368.4 L532.2 368.3 L533.2 368.2 L534.1 368.0 L535.0 367.8 L535.9 367.7 L536.8 367.5 L537.7 367.3 L538.6 367.0 L539.5 366.8 L540.4 366.6 L541.2 366.3 L542.1 366.0 L542.9 365.8 L543.8 365.5 L544.6 365.2 L545.4 364.9 L546.3 364.5 L547.1 364.2 L547.9 363.9 L548.7 363.5 L549.5 363.1 L550.2 362.8 L551.0 362.4 L551.8 362.0 L552.5 361.6 L553.3 361.2 L554.0 360.8 L554.8 360.3 L555.5 359.9 L556.2 359.4 L556.9 359.0 L557.6 358.5 L558.3 358.1 L559.0 357.6 L559.7 357.1 L560.4 356.6 L561.0 356.1 L561.7 355.6 L562.4 355.1 L563.0 354.5 L563.6 354.0 L564.3 353.5 L564.9 352.9 L565.5 352.4 L566.1 351.8 L566.7 351.2 L567.3 350.7 L567.9 350.1 L568.5 349.5 L569.0 348.9 L569.6 348.3 L570.1 347.7 L570.7 347.1 L571.2 346.5 L571.8 345.8 L572.3 345.2 L572.8 344.6 L573.3 343.9 L573.8 343.3 L574.3 342.6 L574.8 342.0 L575.2 341.3 L575.7 340.6 L576.1 340.0 L576.6 339.3 L577.0 338.6 L577.5 337.9 L577.9 337.2 L578.3 336.5 L578.7 335.8 L579.1 335.1 L579.5 334.4 L579.8 333.7 L580.2 333.0 L580.6 332.2 L580.9 331.5 L581.3 330.8 L581.6 330.1 L581.9 329.3 L582.2 328.6 L582.5 327.8 L582.8 327.1 L583.1 326.3 L583.4 325.6 L583.7 324.8 L583.9 324.0 L584.2 323.3 L584.4 322.5 L584.7 321.7 L584.9 321.0 L585.2 320.2 L585.4 319.4 L585.6 318.6 L585.8 317.9 L586.0 317.1 L586.2 316.3 L586.4 315.5 L586.5 314.7 L586.7 313.9 L586.8 313.1 L587.0 312.3 L587.1 311.5 L587.2 310.7 L587.3 309.9 L587.4 309.1 L587.5 308.3 L587.6 307.5 L587.7 306.7 L587.7 305.9 L587.8 305.1 L587.8 304.3 L587.9 303.5 L587.9 302.7 L587.9 301.9 L587.9 301.0 L587.9 300.2 L587.9 299.4 L587.9 298.6 L587.8 297.8 L587.8 297.0 L587.7 296.2 L587.7 295.3 L587.6 294.5 L587.5 293.7 L587.4 292.9 L587.3 292.1 L587.2 291.3 L587.1 290.5 L586.9 289.7 L586.8 288.8 L586.6 288.0 L586.5 287.2 L586.3 286.4 L586.1 285.6 L585.9 284.8 L585.7 284.0 L585.5 283.2 L585.3 282.4 L585.0 281.6 L584.8 280.8 L584.5 280.0 L584.2 279.2 L584.0 278.4 L583.7 277.6 L583.4 276.9 L583.1 276.1 L582.7 275.3 L582.4 274.5 L582.1 273.7 L581.7 273.0 L581.3 272.2 L580.9 271.4 L580.6 270.7 L580.2 269.9 L579.7 269.1 L579.3 268.4 L578.9 267.6 L578.4 266.9 L578.0 266.2 L577.5 265.4 L577.0 264.7 L576.5 264.0 L576.0 263.2 L575.5 262.5 L575.0 261.8 L574.4 261.1 L573.9 260.4 L573.3 259.7 L572.7 259.0 L572.1 258.3 L571.5 257.6 L570.8 256.9 L570.2 256.3 L569.5 255.6 L568.9 254.9 L568.2 254.3 L567.5 253.6 L566.7 253.0 L566.0 252.4 L565.2 251.8 L564.5 251.1 L563.7 250.5 L562.9 249.9 L562.1 249.3 L561.2 248.8 L560.4 248.2 L559.9 247.6 L560.6 246.8 L561.3 246.0 L562.0 245.3 L562.6 244.5 L563.2 243.7 L563.8 242.9 L564.4 242.1 L565.0 241.3 L565.5 240.6 L566.1 239.8 L566.6 239.0 L567.1 238.2 L567.6 237.3 L568.1 236.5 L568.5 235.7 L568.9 234.9 L569.4 234.1 L569.8 233.3 L570.2 232.5 L570.5 231.6 L570.9 230.8 L571.3 230.0 L571.6 229.2 L571.9 228.4 L572.2 227.5 L572.5 226.7 L572.8 225.9 L573.1 225.0 L573.3 224.2 L573.6 223.4 L573.8 222.5 L574.0 221.7 L574.2 220.9 L574.4 220.0 L574.6 219.2 L574.8 218.4 L575.0 217.5 L575.1 216.7 L575.2 215.8 L575.4 215.0 L575.5 214.2 L575.6 213.3 L575.7 212.5 L575.8 211.7 L575.8 210.8 L575.9 210.0 L576.0 209.2 L576.0 208.3 L576.0 207.5 L576.0 206.7 L576.0 205.8 L576.0 205.0 L576.0 204.2 L576.0 203.4 L576.0 202.5 L575.9 201.7 L575.9 200.9 L575.8 200.1 L575.8 199.2 L575.7 198.4 L575.6 197.6 L575.5 196.8 L575.4 196.0 L575.2 195.2 L575.1 194.4 L575.0 193.6 L574.8 192.8 L574.7 192.0 L574.5 191.2 L574.3 190.4 L574.1 189.6 L573.9 188.8 L573.7 188.0 L573.5 187.2 L573.3 186.4 L573.0 185.7 L572.8 184.9 L572.5 184.1 L572.3 183.4 L572.0 182.6 L571.7 181.8 L571.4 181.1 L571.1 180.3 L570.8 179.6 L570.5 178.8 L570.2 178.1 L569.8 177.4 L569.5 176.6 L569.1 175.9 L568.8 175.2 L568.4 174.5 L568.0 173.8 L567.6 173.1 L567.2 172.4 L566.8 171.7 L566.4 171.0 L566.0 170.3 L565.6 169.6 L565.2 168.9 L564.7 168.2 L564.3 167.5 L563.9 166.9 L563.4 166.2 L562.9 165.5 L562.5 164.9 L562.0 164.2 L561.5 163.6 L561.0 162.9 L560.5 162.3 L560.0 161.7 L559.5 161.0 L559.0 160.4 L558.5 159.8 L557.9 159.2 L557.4 158.6 L556.8 158.0 L556.3 157.4 L555.7 156.9 L555.1 156.3 L554.5 155.7 L554.0 155.2 L553.4 154.6 L552.8 154.1 L552.1 153.5 L551.5 153.0 L550.9 152.5 L550.3 152.0 L549.6 151.4 L549.0 150.9 L548.4 150.5 L547.7 150.0 L547.0 149.5 L546.4 149.0 L545.7 148.5 L545.0 148.1 L544.3 147.6 L543.6 147.2 L542.9 146.8 L542.2 146.4 L541.5 145.9 L540.8 145.5 L540.1 145.1 L539.3 144.7 L538.6 144.4 L537.9 144.0 L537.1 143.6 L536.4 143.3 L535.6 142.9 L534.8 142.6 L534.1 142.3 L533.3 141.9 L532.5 141.6 L531.7 141.3 L530.9 141.0 L530.2 140.8 L529.4 140.5 L528.5 140.2 L527.7 140.0 L526.9 139.7 L526.1 139.5 L525.3 139.3 L524.4 139.1 L523.6 138.9 L522.8 138.7 L521.9 138.5 L521.1 138.3 L520.2 138.2 L519.4 138.0 L518.5 137.9 L517.6 137.8 L516.8 137.7 L515.9 137.6 L515.0 137.5 L514.1 137.4 L513.2 137.4 L512.3 137.3 L511.4 137.3 L510.5 137.3 L509.6 137.3 L508.7 137.3 L507.7 137.3 L506.8 137.4 L505.9 137.4 L504.9 137.5 L504.0 137.6 L503.0 137.7 L502.1 137.8 L501.1 138.0 L500.2 138.1 L499.2 138.3 L498.2 138.5 L497.3 138.7 L496.3 138.9 L495.3 139.2 L494.3 139.4 L493.3 139.7 L493.1 138.8 L493.0 137.8 L492.8 136.8 L492.7 135.8 L492.5 134.8 L492.3 133.8 L492.1 132.9 L491.9 131.9 L491.6 131.0 L491.4 130.0 L491.1 129.1 L490.9 128.2 L490.6 127.3 L490.3 126.4 L490.0 125.6 L489.6 124.7 L489.3 123.8 L489.0 123.0 L488.6 122.1 L488.2 121.3 L487.9 120.5 L487.5 119.7 L487.1 118.9 L486.7 118.1 L486.2 117.3 L485.8 116.6 L485.4 115.8 L484.9 115.0 L484.5 114.3 L484.0 113.6 L483.5 112.8 L483.0 112.1 L482.5 111.4 L482.0 110.7 L481.5 110.0 L481.0 109.4 L480.5 108.7 L480.0 108.0 L479.4 107.4 L478.9 106.7 L478.3 106.1 L477.8 105.4 L477.2 104.8 L476.6 104.2 L476.0 103.6 L475.5 103.0 L474.9 102.4 L474.3 101.8 L473.7 101.3 L473.0 100.7 L472.4 100.2 L471.8 99.6 L471.2 99.1 L470.5 98.5 L469.9 98.0 L469.2 97.5 L468.6 97.0 L467.9 96.5 L467.3 96.0 L466.6 95.6 L465.9 95.1 L465.2 94.6 L464.6 94.2 L463.9 93.7 L463.2 93.3 L462.5 92.9 L461.8 92.5 L461.1 92.1 L460.3 91.7 L459.6 91.3 L458.9 90.9 L458.2 90.5 L457.5 90.2 L456.7 89.8 L456.0 89.5 L455.2 89.2 L454.5 88.8 L453.8 88.5 L453.0 88.2 L452.3 87.9 L451.5 87.6 L450.7 87.4 L450.0 87.1 L449.2 86.8 L448.4 86.6 L447.7 86.3 L446.9 86.1 L446.1 85.9 L445.3 85.7 L444.6 85.5 L443.8 85.3 L443.0 85.1 L442.2 84.9 L441.4 84.7 L440.6 84.6 L439.8 84.4 L439.0 84.3 L438.2 84.2 L437.4 84.0 L436.6 83.9 L435.8 83.8 L435.0 83.7 L434.2 83.6 L433.4 83.5 L432.6 83.4 L431.8 83.3 L431.0 83.3 L430.2 83.2 L429.4 83.2 L428.6 83.2 L427.8 83.1 L427.0 83.1 L426.2 83.1 L425.4 83.1 L424.6 83.1 L423.8 83.2 L423.0 83.2 L422.1 83.2 L421.3 83.3 L420.5 83.4 L419.7 83.4 L418.9 83.5 L418.1 83.6 L417.3 83.7 L416.5 83.8 L415.7 84.0 L414.9 84.1 L414.1 84.2 L413.3 84.4 L412.5 84.6 L411.7 84.7 L410.9 84.9 L410.1 85.1 L409.3 85.3 L408.5 85.5 L407.7 85.7 L406.9 86.0 L406.2 86.2 L405.4 86.5 L404.6 86.7 L403.8 87.0 L403.0 87.3 L402.3 87.6 L401.5 87.9 L400.7 88.2 L400.0 88.5 L399.2 88.9 L398.4 89.2 L397.7 89.5 L396.9 89.9 L396.2 90.3 L395.4 90.7 L394.7 91.1 L394.0 91.5 L393.2 91.9 L392.5 92.3 L391.8 92.7 L391.0 93.2 L390.3 93.6 L389.6 94.1 L388.9 94.6 L388.2 95.1 L387.5 95.6 L386.8 96.1 L386.1 96.6 L385.4 97.1 L384.8 97.7 L384.1 98.2 L383.4 98.8 L382.8 99.3 L382.1 99.9 L381.5 100.5 L380.8 101.1 L380.2 101.8 L379.5 102.4 L378.9 103.0 L378.3 103.7 L377.7 104.4 L377.1 105.1 L376.5 105.8 L375.9 106.5 L375.3 107.2 L374.8 107.9 L374.2 108.7 L373.6 109.4 L373.1 110.2 L372.6 111.0 L372.0 111.8 L371.5 112.7 L371.0 113.5 L370.5 114.3 L370.0 115.2 L369.6 116.1 L369.1 117.0 L368.6 117.9 L368.2 118.9 L367.5 119.0 L366.7 118.4 L365.8 117.8 L365.0 117.3 L364.1 116.8 L363.2 116.3 L362.4 115.8 L361.5 115.3 L360.7 114.9 L359.8 114.4 L358.9 114.0 L358.1 113.6 L357.2 113.3 L356.3 112.9 L355.5 112.6 L354.6 112.2 L353.7 111.9 L352.9 111.6 L352.0 111.3 L351.1 111.1 L350.3 110.8 L349.4 110.6 L348.5 110.4 L347.7 110.1 L346.8 109.9 L345.9 109.8 L345.1 109.6 L344.2 109.4 L343.4 109.3 L342.5 109.2 L341.6 109.0 L340.8 108.9 L339.9 108.8 L339.1 108.7 L338.2 108.7 L337.4 108.6 L336.5 108.6 L335.7 108.5 L334.8 108.5 L334.0 108.5 L333.1 108.5 L332.3 108.5 L331.4 108.5 L330.6 108.5 L329.8 108.6 L328.9 108.6 L328.1 108.7 L327.3 108.8 L326.4 108.8 L325.6 108.9 L324.8 109.0 L323.9 109.1 L323.1 109.3 L322.3 109.4 L321.5 109.5 L320.7 109.7 L319.9 109.8 L319.1 110.0 L318.3 110.2 L317.5 110.4 L316.7 110.6 L315.9 110.8 L315.1 111.0 L314.3 111.3 L313.5 111.5 L312.7 111.7 L312.0 112.0 L311.2 112.3 L310.4 112.5 L309.7 112.8 L308.9 113.1 L308.1 113.4 L307.4 113.7 L306.7 114.0 L305.9 114.4 L305.2 114.7 L304.4 115.1 L303.7 115.4 L303.0 115.8 L302.3 116.2 L301.6 116.5 L300.8 116.9 L300.1 117.3 L299.4 117.7 L298.7 118.1 L298.1 118.6 L297.4 119.0 L296.7 119.4 L296.0 119.9 L295.4 120.3 L294.7 120.8 L294.0 121.3 L293.4 121.7 L292.7 122.2 L292.1 122.7 L291.5 123.2 L290.8 123.7 L290.2 124.2 L289.6 124.8 L289.0 125.3 L288.4 125.8 L287.8 126.3 L287.2 126.9 L286.6 127.4 L286.0 128.0 L285.4 128.5 L284.8 129.1 L284.3 129.7 L283.7 130.2 L283.1 130.8 L282.6 131.4 L282.0 132.0 L281.5 132.6 L281.0 133.2 L280.5 133.9 L279.9 134.5 L279.4 135.1 L278.9 135.8 L278.5 136.4 L278.0 137.1 L277.5 137.7 L277.0 138.4 L276.6 139.0 L276.1 139.7 L275.7 140.4 L275.2 141.1 L274.8 141.8 L274.4 142.5 L274.0 143.2 L273.6 143.9 L273.2 144.6 L272.8 145.3 L272.4 146.0 L272.0 146.8 L271.7 147.5 L271.3 148.3 L271.0 149.0 L270.7 149.7 L270.3 150.5 L270.0 151.3 L269.7 152.0 L269.4 152.8 L269.1 153.6 L268.8 154.4 L268.6 155.1 L268.3 155.9 L268.1 156.7 L267.8 157.5 L267.6 158.3 L267.4 159.1 L267.1 159.9 L266.9 160.7 L266.8 161.6 L266.6 162.4 L266.4 163.2 L266.2 164.0 L266.1 164.9 L265.9 165.7 L265.8 166.5 L265.7 167.4 L265.6 168.2 L265.5 169.1 L265.4 169.9 L265.3 170.8 L265.3 171.6 L265.2 172.5 L265.2 173.4 L265.1 174.2 L265.1 175.1 L265.1 176.0 L265.1 176.9 L265.2 177.7 L265.2 178.6 L265.2 179.5 L265.3 180.4 L265.4 181.3 L265.5 182.2 L265.6 183.1 L265.7 184.0 L265.8 184.9 L266.0 185.8 L266.1 186.7 L266.3 187.6 L266.5 188.5 L266.7 189.5 L267.0 190.4 L267.2 191.3 L267.5 192.2 L267.7 193.2 L268.0 194.1 L268.3 195.0 L268.7 196.0 L269.0 196.9 L269.4 197.9 L269.8 198.8 L270.2 199.7 L270.4 200.6 L269.4 200.8 L268.4 201.1 L267.4 201.4 L266.4 201.7 L265.5 202.0 L264.6 202.3 L263.6 202.7 L262.7 203.0 L261.8 203.4 L261.0 203.8 L260.1 204.2 L259.2 204.6 L258.4 205.0 L257.5 205.4 L256.7 205.9 L255.9 206.3 L255.1 206.8 L254.3 207.2 L253.6 207.7 L252.8 208.2 L252.1 208.7 L251.3 209.2 L250.6 209.7 L249.9 210.2 L249.2 210.7 L248.5 211.3 L247.8 211.8 L247.1 212.4 L246.4 212.9 L245.8 213.5 L245.1 214.1 L244.5 214.7 L243.9 215.3 L243.2 215.9 L242.6 216.5 L242.0 217.1 L241.4 217.7 L240.9 218.3 L240.3 218.9 L239.7 219.6 L239.2 220.2 L238.6 220.8 L238.1 221.5 L237.6 222.2 L237.1 222.8 L236.6 223.5 L236.1 224.2 L235.6 224.8 L235.1 225.5 L234.6 226.2 L234.2 226.9 L233.7 227.6 L233.3 228.3 L232.9 229.0 L232.5 229.7 L232.0 230.4 L231.6 231.2 L231.2 231.9 L230.9 232.6 L230.5 233.3 L230.1 234.1 L229.8 234.8 L229.4 235.6 L229.1 236.3 L228.8 237.1 L228.4 237.8 L228.1 238.6 L227.8 239.3 L227.6 240.1 L227.3 240.9 L227.0 241.6 L226.7 242.4 L226.5 243.2 L226.3 243.9 L226.0 244.7 L225.8 245.5 L225.6 246.3 L225.4 247.1 L225.2 247.8 L225.0 248.6 L224.8 249.4 L224.7 250.2 L224.5 251.0 L224.4 251.8 L224.2 252.6 L224.1 253.4 L224.0 254.2 L223.9 255.0 L223.8 255.8 L223.7 256.6 L223.6 257.4 L223.6 258.2 L223.5 259.0 L223.4 259.8 L223.4 260.6 L223.4 261.4 L223.4 262.2 L223.3 263.1 L223.3 263.9 L223.3 264.7 L223.3 265.5 L223.3 266.3 L223.3 267.1 L223.4 267.9 L223.4 268.7 L223.5 269.5 L223.5 270.3 L223.6 271.1 L223.7 271.9 L223.7 272.7 L223.8 273.5 L223.9 274.3 L224.1 275.1 L224.2 275.9 L224.3 276.7 L224.5 277.5 L224.6 278.3 L224.8 279.1 L224.9 279.9 L225.1 280.7 L225.3 281.5 L225.5 282.3 L225.7 283.0 L226.0 283.8 L226.2 284.6 L226.4 285.4 L226.7 286.2 L226.9 286.9 L227.2 287.7 L227.5 288.5 L227.8 289.2 L228.1 290.0 L228.4 290.8 L228.7 291.5 L229.0 292.3 L229.3 293.0 L229.7 293.8 L230.0 294.5 L230.4 295.2 L230.8 296.0 L231.2 296.7 L231.6 297.4 L232.0 298.2 L232.4 298.9 L232.8 299.6 L233.2 300.3 L233.7 301.0 L234.1 301.7 L234.6 302.4 L235.0 303.1 L235.5 303.8 L236.0 304.5 L236.5 305.1 L237.0 305.8 L237.5 306.5 L238.0 307.1 L238.6 307.8 L239.1 308.4 L239.7 309.1 L240.2 309.7 L240.8 310.4 L241.4 311.0 L242.0 311.6 L242.6 312.2 L243.2 312.8 L243.8 313.4 L244.5 314.0 L245.1 314.6 L245.8 315.2 L246.4 315.7 L247.1 316.3 L247.8 316.9 L248.5 317.4 L249.2 317.9 L249.9 318.5 L250.7 319.0 L251.4 319.5 L252.2 320.0 L252.9 320.5 L253.7 321.0 L254.5 321.5 L255.3 321.9 L256.1 322.4 L257.0 322.8 L257.8 323.3 L258.6 323.7 L259.5 324.1 L260.4 324.5 L261.3 324.9 L262.2 325.3 L263.1 325.7 L264.0 326.0 L265.0 326.4 L266.0 326.7 L266.9 327.0 L267.9 327.3 L267.7 328.1 L267.3 329.0 L266.9 330.0 L266.5 330.9 L266.1 331.8 L265.7 332.7 L265.4 333.7 L265.0 334.6 L264.7 335.5 L264.4 336.4 L264.1 337.3 L263.9 338.2 L263.6 339.2 L263.4 340.1 L263.2 341.0 L263.0 341.9 L262.8 342.8 L262.6 343.7 L262.5 344.6 L262.3 345.5 L262.2 346.4 L262.1 347.2 L262.0 348.1 L261.9 349.0 L261.9 349.9 L261.8 350.8 L261.8 351.7 L261.7 352.5 L261.7 353.4 L261.7 354.3 L261.7 355.1 L261.7 356.0 L261.8 356.9 L261.8 357.7 L261.9 358.6 L261.9 359.4 L262.0 360.3 L262.1 361.1 L262.2 362.0 L262.3 362.8 L262.4 363.6 L262.5 364.5 L262.7 365.3 L262.8 366.1 L263.0 367.0 L263.2 367.8 L263.3 368.6 L263.5 369.4 L263.7 370.2 L263.9 371.0 L264.2 371.8 L264.4 372.6 L264.6 373.4 L264.9 374.2 L265.1 375.0 L265.4 375.8 L265.7 376.5 L266.0 377.3 L266.3 378.1 L266.6 378.8 L266.9 379.6 L267.2 380.4 L267.5 381.1 L267.9 381.9 L268.2 382.6 L268.6 383.3 L269.0 384.1 L269.3 384.8 L269.7 385.5 L270.1 386.2 L270.5 386.9 L270.9 387.6 L271.3 388.3 L271.8 389.0 L272.2 389.7 L272.6 390.4 L273.1 391.1 L273.6 391.7 L274.0 392.4 L274.5 393.0 L275.0 393.7 L275.5 394.3 L276.0 395.0 L276.5 395.6 L277.0 396.2 L277.5 396.9 L278.0 397.5 L278.5 398.1 L279.1 398.7 L279.6 399.3 L280.2 399.9 L280.7 400.4 L281.3 401.0 L281.9 401.6 L282.5 402.1 L283.0 402.7 L283.6 403.2 L284.2 403.8 L284.8 404.3 L285.4 404.9 L286.0 405.4 L286.7 405.9 L287.3 406.4 L287.9 406.9 L288.5 407.4 L289.2 407.9 L289.8 408.4 L290.5 408.9 L291.1 409.4 L291.8 409.8 L292.5 410.3 L293.1 410.7 L293.8 411.2 L294.5 411.6 L295.2 412.0 L295.9 412.5 L296.6 412.9 L297.3 413.3 L298.0 413.7 L298.7 414.0 L299.4 414.4 L300.1 414.8 L300.9 415.1 L301.6 415.5 L302.3 415.8 L303.1 416.2 L303.8 416.5 L304.6 416.8 L305.3 417.1 L306.1 417.4 L306.9 417.7 L307.6 418.0 L308.4 418.2 L309.2 418.5 L310.0 418.7 L310.7 419.0 L311.5 419.2 L312.3 419.4 L313.1 419.6 L313.9 419.8 L314.7 420.0 L315.5 420.2 L316.3 420.4 L317.1 420.6 L318.0 420.7 L318.8 420.9 L319.6 421.0 L320.4 421.1 L321.3 421.2 L322.1 421.3 L322.9 421.4 L323.7 421.5 L324.6 421.6 L325.4 421.6 L326.3 421.7 L327.1 421.7 L327.9 421.8 L328.8 421.8 L329.6 421.8 L330.5 421.8 L331.3 421.8 L332.2 421.7 L333.1 421.7 L333.9 421.6 L334.8 421.6 L335.6 421.5 L336.5 421.4 L337.4 421.3 L338.2 421.2 L339.1 421.1 L340.0 420.9 L340.8 420.8 L341.7 420.6 L342.6 420.4 L343.5 420.2 L344.3 420.0 L345.2 419.8 L346.1 419.6 L347.0 419.3 L347.8 419.1 L348.7 418.8 L349.6 418.5 L350.5 418.2 L351.3 417.9 L352.2 417.5 L353.1 417.2 L354.0 416.8 L354.9 416.4 L355.7 416.0 L356.6 415.5 L357.5 415.1 L358.4 414.6 L359.3 414.1 L360.1 413.6 L361.0 413.1 L361.9 412.6 L362.6 412.7 L363.0 413.6 L363.4 414.6 L363.8 415.5 L364.3 416.4 L364.7 417.3 L365.2 418.2 L365.6 419.0 L366.1 419.9 L366.6 420.7 L367.1 421.5 L367.6 422.3 L368.2 423.1 L368.7 423.9 L369.2 424.6 L369.8 425.4 L370.3 426.1 L370.9 426.8 L371.5 427.5 L372.1 428.2 L372.7 428.9 L373.3 429.6 L373.9 430.2 L374.5 430.9 L375.1 431.5 L375.7 432.1 L376.4 432.8 L377.0 433.4 L377.6 433.9 L378.3 434.5 L378.9 435.1 L379.6 435.6 L380.3 436.2 L381.0 436.7 L381.6 437.3 L382.3 437.8 L383.0 438.3 L383.7 438.8 L384.4 439.2 L385.1 439.7 L385.8 440.2 L386.5 440.6 L387.2 441.1 L388.0 441.5 L388.7 441.9 L389.4 442.3 L390.2 442.7 L390.9 443.1 L391.6 443.5 L392.4 443.9 L393.1 444.2 L393.9 444.6 L394.6 444.9 L395.4 445.3 L396.2 445.6 L396.9 445.9 L397.7 446.2 L398.5 446.5 L399.2 446.8 L400.0 447.0 L400.8 447.3 L401.6 447.6 L402.3 447.8 L403.1 448.0 L403.9 448.3 L404.7 448.5 L405.5 448.7 L406.3 448.9 L407.1 449.1 L407.9 449.2 L408.7 449.4 L409.5 449.5 L410.3 449.7 L411.1 449.8 L411.9 449.9 L412.7 450.1 L413.5 450.2 L414.3 450.3 L415.1 450.4 L415.9 450.4 L416.7 450.5 L417.5 450.6 L418.3 450.6 L419.1 450.6 L419.9 450.7 L420.7 450.7 L421.6 450.7 L422.4 450.7 L423.2 450.7 L424.0 450.7 L424.8 450.6 L425.6 450.6 L426.4 450.5 L427.2 450.5 L428.0 450.4 L428.8 450.3 L429.6 450.3 L430.4 450.2 L431.2 450.1 L432.0 450.0 L432.8 449.8 L433.6 449.7 L434.4 449.6 L435.2 449.5 L436.0 449.3 L436.8 449.2 L437.6 449.0 L438.4 448.8 L439.2 448.6 L439.9 448.5 L440.7 448.2 L441.5 448.0 L442.3 447.8 L443.1 447.6 L443.8 447.4 L444.6 447.1 L445.4 446.8 L446.1 446.6 L446.9 446.3 L447.6 446.0 L448.4 445.7 L449.2 445.4 L449.9 445.1 L450.6 444.8 L451.4 444.4 L452.1 444.1 L452.9 443.8 L453.6 443.4 L454.3 443.0 L455.0 442.7 L455.8 442.3 L456.5 441.9 L457.2 441.5 L457.9 441.1 L458.6 440.6 L459.3 440.2 L460.0 439.8 L460.7 439.3 L461.4 438.8 L462.0 438.4 L462.7 437.9 L463.4 437.4 L464.0 436.9 L464.7 436.4 L465.3 435.9 L466.0 435.4 L466.6 434.9 L467.3 434.3 L467.9 433.8 L468.5 433.2 L469.1 432.7 L469.7 432.1 L470.3 431.5 L470.9 430.9 L471.5 430.3 L472.1 429.7 L472.7 429.1 L473.3 428.5 L473.8 427.8 L474.4 427.2 L474.9 426.5 L475.5 425.9 L476.0 425.2 L476.5 424.5 L477.1 423.8 L477.6 423.1 L478.1 422.4 L478.6 421.7 L479.0 421.0 L479.5 420.3 L480.0 419.5 L480.4 418.8 L480.9 418.0 L481.3 417.2 L481.8 416.4 L482.2 415.6 L482.6 414.8 L483.0 414.0 L483.4 413.2 L483.8 412.4 L484.1 411.5 L484.5 410.7 L484.8 409.8 L485.2 408.9 L485.5 408.1 L485.8 407.2 L486.1 406.3 L486.4 405.3 L486.6 404.4 L486.9 403.5 L487.1 402.5 L487.4 401.5 L487.6 400.6 L487.8 399.6 L488.0 398.6 L488.1 397.5 L488.4 396.6 L489.3 397.0 L490.3 397.3 L491.3 397.6 L492.3 397.8 L493.3 398.1 L494.2 398.3 L495.2 398.5 L496.1 398.7 L497.1 398.9 L498.0 399.0 L499.0 399.2 L499.9 399.3 L500.8 399.4 L501.8 399.5 L502.7 399.6 L503.6 399.6 L504.5 399.7 L505.5 399.7 L506.4 399.7 L507.3 399.8 L508.2 399.7 L509.1 399.7 L510.0 399.7 L510.8 399.6 L511.7 399.6 L512.6 399.5 L513.5 399.4 L514.3 399.3 L515.2 399.2 L516.1 399.1 L516.9 399.0 L517.8 398.8 L518.6 398.7 L519.5 398.5 L520.3 398.3 L521.1 398.1 L522.0 397.9 L522.8 397.7 L523.6 397.5 L524.4 397.3 L525.2 397.0 L526.0 396.8 L526.8 396.5 L527.6 396.3 L528.4 396.0 L529.2 395.7 L530.0 395.4 L530.8 395.1 L531.5 394.8 L532.3 394.4 L533.1 394.1 L533.8 393.8 L534.6 393.4 L535.3 393.0 L536.0 392.7 L536.8 392.3 L537.5 391.9 L538.2 391.5 L538.9 391.1 L539.7 390.7 L540.4 390.3 L541.1 389.8 L541.7 389.4 L542.4 389.0 L543.1 388.5 L543.8 388.0 L544.5 387.6 L545.1 387.1 L545.8 386.6 L546.4 386.1 L547.1 385.6 L547.7 385.1 L548.3 384.6 L549.0 384.1 L549.6 383.5 L550.2 383.0 L550.8 382.5 L551.4 381.9 L552.0 381.4 L552.5 380.8 L553.1 380.2 L553.7 379.7 L554.2 379.1 L554.8 378.5 L555.3 377.9 L555.9 377.3 L556.4 376.7 L556.9 376.1 L557.4 375.4 L558.0 374.8 L558.5 374.2 L559.0 373.5 L559.4 372.9 L559.9 372.2 L560.4 371.6 L560.9 370.9 L561.3 370.3 L561.8 369.6 L562.2 368.9 L562.7 368.2 L563.1 367.6 L563.5 366.9 L563.9 366.2 L564.3 365.5 L564.7 364.8 L565.1 364.1 L565.5 363.4 L565.9 362.7 L566.3 362.0 L566.6 361.2 L567.0 360.5 L567.3 359.8 L567.7 359.1 L568.0 358.3 L568.3 357.6 L568.6 356.8 L568.9 356.1 L569.2 355.3 L569.5 354.6 L569.8 353.8 L570.1 353.0 L570.3 352.3 L570.6 351.5 L570.8 350.7 L571.0 349.9 L571.3 349.1 L571.5 348.4 L571.7 347.6 L571.9 346.8 L572.0 346.0 L572.2 345.2 L572.4 344.4 L572.5 343.6 L572.7 342.8 L572.8 342.0 L572.9 341.2 L573.0 340.3 L573.1 339.5 L573.2 338.7 L573.3 337.9 L573.4 337.1 L573.5 336.2 L573.5 335.4 L573.6 334.6 L573.6 333.8 L573.6 332.9 L573.6 332.1 L573.6 331.3 L573.6 330.4 L573.6 329.6 L573.6 328.8 L573.5 327.9 L573.5 327.1 L573.4 326.2 L573.3 325.4 L573.3 324.6 L573.2 323.7 L573.1 322.9 L572.9 322.0 L572.8 321.2 L572.7 320.4 L572.5 319.5 L572.4 318.7 L572.2 317.8 L572.0 317.0 L571.8 316.1 L571.6 315.3 L571.4 314.5 L571.1 313.6 L570.9 312.8 L570.6 311.9 L570.3 311.1 L570.0 310.3 L569.7 309.4 L569.4 308.6 L569.1 307.8 L568.7 306.9 L568.4 306.1 L568.0 305.3 L567.6 304.4 L567.2 303.6 L566.8 302.8 L566.3 301.9 L565.9 301.1 L565.4 300.3 L564.9 299.5 L564.4 298.7 L563.9 297.9 L563.4 297.0 L562.8 296.2 L562.2 295.4 L561.6 294.6 L561.0 293.8 L560.4 293.0 L559.7 292.2 L559.1 291.4 L559.5 290.8 L560.4 290.3 L561.3 289.8 L562.1 289.2 L563.0 288.6 L563.8 288.0 L564.6 287.5 L565.3 286.9 L566.1 286.3 L566.8 285.7 L567.6 285.0 L568.3 284.4 L569.0 283.8 L569.7 283.1 L570.3 282.5 L571.0 281.8 L571.6 281.2 L572.3 280.5 L572.9 279.9 L573.5 279.2 L574.1 278.5 L574.7 277.8 L575.2 277.1 L575.8 276.4 L576.3 275.7 L576.8 275.0 L577.3 274.3 L577.8 273.6 L578.3 272.8 L578.8 272.1 L579.3 271.4 L579.7 270.6 L580.2 269.9 L580.6 269.2 L581.0 268.4 L581.4 267.7 L581.8 266.9 L582.2 266.1 L582.6 265.4 L582.9 264.6 L583.3 263.8 L583.6 263.1 L584.0 262.3 L584.3 261.5 L584.6 260.7 L584.9 260.0 L585.2 259.2 L585.5 258.4 L585.7 257.6 L586.0 256.8 L586.2 256.0 L586.5 255.2 L586.7 254.4 L586.9 253.6 L587.1 252.8 L587.3 252.0 L587.5 251.2 L587.7 250.4 L587.9 249.6 L588.0 248.8 L588.2 248.0 L588.3 247.2 L588.4 246.4 L588.5 245.6 L588.6 244.8 L588.7 244.0 L588.8 243.1 L588.9 242.3 L589.0 241.5 L589.0 240.7 L589.1 239.9 L589.1 239.1 L589.1 238.3 L589.2 237.5 L589.2 236.6 L589.2 235.8 L589.1 235.0 L589.1 234.2 L589.1 233.4 L589.0 232.6 L589.0 231.8 L588.9 231.0 L588.9 230.2 L588.8 229.4 L588.7 228.6 L588.6 227.8 L588.5 227.0 L588.4 226.2 L588.2 225.4 L588.1 224.6 L588.0 223.8 L587.8 223.0 L587.6 222.2 L587.5 221.4 L587.3 220.6 L587.1 219.8 L586.9 219.1 L586.7 218.3 L586.5 217.5 L586.2 216.7 L586.0 215.9 L585.8 215.2 L585.5 214.4 L585.3 213.6 L585.0 212.9 L584.8 212.1 L584.5 211.4 L584.2 210.6 L583.9 209.8 L583.6 209.1 L583.3 208.4 L583.0 207.6 L582.6 206.9 L582.3 206.1 L581.9 205.4 L581.6 204.7 L581.2 204.0 L580.8 203.2 L580.5 202.5 L580.1 201.8 L579.7 201.1 L579.3 200.4 L578.8 199.7 L578.4 199.0 L578.0 198.4 L577.5 197.7 L577.1 197.0 L576.6 196.3 L576.1 195.7 L575.7 195.0 L575.2 194.3 L574.7 193.7 L574.2 193.1 L573.7 192.4 L573.1 191.8 L572.6 191.2 L572.1 190.5 L571.5 189.9 L571.0 189.3 L570.4 188.7 L569.8 188.1 L569.3 187.5 L568.7 186.9 L568.1 186.4 L567.5 185.8 L566.9 185.2 L566.3 184.7 L565.6 184.1 L565.0 183.6 L564.4 183.0 L563.7 182.5 L563.1 182.0 L562.4 181.5 L561.7 181.0 L561.0 180.5 L560.4 180.0 L559.7 179.5 L559.0 179.0 L558.2 178.6 L557.5 178.1 L556.8 177.7 L556.1 177.2 L555.3 176.8 L554.6 176.4 L553.8 176.0 L553.1 175.6 L552.3 175.2 L551.5 174.8 L550.7 174.4 L549.9 174.0 L549.1 173.7 L548.3 173.3 L547.5 173.0 L546.7 172.7 L545.8 172.4 L545.0 172.1 L544.1 171.8 L543.3 171.5 L542.4 171.2 L541.5 171.0 L540.6 170.8 L539.7 170.5 L538.8 170.3 L537.9 170.1 L537.0 169.9 L536.0 169.7 L535.1 169.6 L534.1 169.4 L533.2 169.3 L532.2 169.2 L531.2 169.1 L530.2 169.0 L529.2 168.9 L528.2 168.9 L527.2 168.9 L526.2 168.8 L525.6 168.5 L525.7 167.5 L525.9 166.4 L526.0 165.4 L526.2 164.4 L526.3 163.4 L526.3 162.4 L526.4 161.5 L526.5 160.5 L526.5 159.5 L526.5 158.6 L526.5 157.6 L526.5 156.7 L526.5 155.7 L526.4 154.8 L526.4 153.9 L526.3 153.0 L526.2 152.0 L526.1 151.1 L526.0 150.2 L525.9 149.3 L525.7 148.5 L525.6 147.6 L525.4 146.7 L525.2 145.8 L525.0 145.0 L524.8 144.1 L524.6 143.3 L524.4 142.4 L524.2 141.6 L523.9 140.7 L523.7 139.9 L523.4 139.1 L523.1 138.3 L522.8 137.5 L522.5 136.7 L522.2 135.9 L521.9 135.1 L521.6 134.3 L521.3 133.5 L520.9 132.8 L520.6 132.0 L520.2 131.2 L519.8 130.5 L519.4 129.7 L519.0 129.0 L518.6 128.3 L518.2 127.5 L517.8 126.8 L517.4 126.1 L517.0 125.4 L516.5 124.7 L516.1 124.0 L515.6 123.3 L515.1 122.6 L514.7 121.9 L514.2 121.3 L513.7 120.6 L513.2 119.9 L512.7 119.3 L512.2 118.6 L511.7 118.0 L511.1 117.4 L510.6 116.8 L510.1 116.2 L509.5 115.5 L509.0 114.9 L508.4 114.4 L507.8 113.8 L507.3 113.2 L506.7 112.6 L506.1 112.1 L505.5 111.5 L504.9 111.0 L504.3 110.4 L503.7 109.9 L503.1 109.4 L502.4 108.8 L501.8 108.3 L501.2 107.8 L500.5 107.3 L499.9 106.9 L499.2 106.4 L498.6 105.9 L497.9 105.5 L497.2 105.0 L496.6 104.6 L495.9 104.1 L495.2 103.7 L494.5 103.3 L493.8 102.9 L493.1 102.5 L492.4 102.1 L491.7 101.7 L491.0 101.3 L490.3 100.9 L489.5 100.6 L488.8 100.2 L488.1 99.9 L487.4 99.5 L486.6 99.2 L485.9 98.8 L485.2 98.5 L484.4 98.2 L483.7 97.9 L482.9 97.6 L482.2 97.3 L481.4 97.0 L480.6 96.7 L479.9 96.5 L479.1 96.2 L478.3 96.0 L477.6 95.7 L476.8 95.5 L476.0 95.3 L475.2 95.1 L474.5 94.9 L473.7 94.7 L472.9 94.5 L472.1 94.4 L471.3 94.2 L470.5 94.0 L469.7 93.9 L468.9 93.8 L468.1 93.6 L467.3 93.5 L466.5 93.4 L465.7 93.3 L464.9 93.2 L464.0 93.2 L463.2 93.1 L462.4 93.1 L461.6 93.0 L460.8 93.0 L460.0 93.0 L459.1 92.9 L458.3 92.9 L457.5 92.9 L456.7 93.0 L455.9 93.0 L455.0 93.0 L454.2 93.1 L453.4 93.1 L452.6 93.2 L451.7 93.3 L450.9 93.4 L450.1 93.5 L449.3 93.6 L448.4 93.7 L447.6 93.8 L446.8 94.0 L446.0 94.1 L445.1 94.3 L444.3 94.4 L443.5 94.6 L442.7 94.8 L441.9 95.0 L441.0 95.2 L440.2 95.5 L439.4 95.7 L438.6 96.0 L437.8 96.2 L437.0 96.5 L436.2 96.8 L435.4 97.1 L434.5 97.4 L433.7 97.7 L432.9 98.0 L432.1 98.4 L431.3 98.7 L430.5 99.1 L429.8 99.5 L429.0 99.9 L428.2 100.3 L427.4 100.7 L426.6 101.2 L425.8 101.6 L425.1 102.1 L424.3 102.6 L423.5 103.1 L422.7 103.6 L422.0 104.1 L421.2 104.6 L420.5 105.2 L419.7 105.8 L419.0 106.3 L418.2 106.9 L417.5 107.6 L416.8 108.2 L416.1 108.9 L415.3 109.5 L414.6 110.2 L413.9 110.9 L413.2 111.6 L412.5 112.4 L411.8 113.2 L411.1 113.9"/></g>
<g stroke="#ffff00"><path d="M577.0 266.6 L576.9 260.7 L576.6 254.8 L576.1 249.0 L575.4 243.1 L574.4 237.3 L573.3 231.5 L572.0 225.8 L570.5 220.1 L568.7 214.4 L566.8 208.9 L564.7 203.4 L562.4 197.9 L559.9 192.6 L557.2 187.4 L554.4 182.2 L551.4 177.1 L548.1 172.2 L544.8 167.4 L541.2 162.7 L537.5 158.1 L533.6 153.7 L529.6 149.3 L525.5 145.2 L521.1 141.2 L516.7 137.3 L512.1 133.6 L507.4 130.0 L502.6 126.7 L497.7 123.4 L492.6 120.4 L487.4 117.6 L482.2 114.9 L476.9 112.4 L471.4 110.1 L465.9 108.0 L460.4 106.1 L454.7 104.3 L449.0 102.8 L443.3 101.5 L437.5 100.4 L431.7 99.4 L425.8 98.7 L420.0 98.2 L414.1 97.9 L408.2 97.8 L402.3 97.9 L396.4 98.2 L390.6 98.7 L384.7 99.4 L378.9 100.4 L373.1 101.5 L367.4 102.8 L361.7 104.3 L356.0 106.1 L350.5 108.0 L345.0 110.1 L339.5 112.4 L334.2 114.9 L329.0 117.6 L323.8 120.4 L318.7 123.4 L313.8 126.7 L309.0 130.0 L304.3 133.6 L299.7 137.3 L295.3 141.2 L290.9 145.2 L286.8 149.3 L282.8 153.7 L278.9 158.1 L275.2 162.7 L271.6 167.4 L268.3 172.2 L265.0 177.1 L262.0 182.2 L259.2 187.4 L256.5 192.6 L254.0 197.9 L251.7 203.4 L249.6 208.9 L247.7 214.4 L245.9 220.1 L244.4 225.8 L243.1 231.5 L242.0 237.3 L241.0 243.1 L240.3 249.0 L239.8 254.8 L239.5 260.7 L239.4 266.6 L239.5 272.5 L239.8 278.4 L240.3 284.2 L241.0 290.1 L242.0 295.9 L243.1 301.7 L244.4 307.4 L245.9 313.1 L247.7 318.8 L249.6 324.3 L251.7 329.8 L254.0 335.3 L256.5 340.6 L259.2 345.8 L262.0 351.0 L265.0 356.1 L268.3 361.0 L271.6 365.8 L275.2 370.5 L278.9 375.1 L282.8 379.5 L286.8 383.9 L290.9 388.0 L295.3 392.0 L299.7 395.9 L304.3 399.6 L309.0 403.2 L313.8 406.5 L318.7 409.8 L323.8 412.8 L329.0 415.6 L334.2 418.3 L339.5 420.8 L345.0 423.1 L350.5 425.2 L356.0 427.1 L361.7 428.9 L367.4 430.4 L373.1 431.7 L378.9 432.8 L384.7 433.8 L390.6 434.5 L396.4 435.0 L402.3 435.3 L408.2 435.4 L414.1 435.3 L420.0 435.0 L425.8 434.5 L431.7 433.8 L437.5 432.8 L443.3 431.7 L449.0 430.4 L454.7 428.9 L460.4 427.1 L465.9 425.2 L471.4 423.1 L476.9 420.8 L482.2 418.3 L487.4 415.6 L492.6 412.8 L497.7 409.8 L502.6 406.5 L507.4 403.2 L512.1 399.6 L516.7 395.9 L521.1 392.0 L525.5 388.0 L529.6 383.9 L533.6 379.5 L537.5 375.1 L541.2 370.5 L544.8 365.8 L548.1 361.0 L551.4 356.1 L554.4 351.0 L557.2 345.8 L559.9 340.6 L562.4 335.3 L564.7 329.8 L566.8 324.3 L568.7 318.8 L570.5 313.1 L572.0 307.4 L573.3 301.7 L574.4 295.9 L575.4 290.1 L576.1 284.2 L576.6 278.4 L576.9 272.5 L577.0 266.6"/></g>
<g stroke="#ff99ff"><path d="M249.1 150.7 L249.5 150.3 L250.0 149.8 L250.5 149.2 L251.2 148.6 L252.0 148.0 L252.8 147.5 L253.7 147.1 L254.7 146.8 L255.7 146.5 L256.8 146.3 L258.0 146.0 L259.2 145.7 L260.5 145.3 L261.8 145.0 L263.1 144.6 L264.5 144.2 L266.0 143.8 L267.4 143.4 L268.9 143.0 L270.4 142.6 L271.9 142.2 L273.5 141.8 L275.1 141.5 L276.6 141.1 L278.1 140.8 L279.6 140.5 L281.2 140.2 L282.7 139.9 L284.2 139.6 L285.7 139.3 L287.2 139.0 L288.7 138.7 L290.2 138.5 L291.8 138.2 L293.3 137.9 L294.8 137.5 L296.3 137.1 L297.9 136.7 L299.4 136.2 L300.9 135.7 L302.5 135.2 L304.0 134.7 L305.5 134.2 L307.1 133.6 L308.6 133.1 L310.2 132.5 L311.7 132.0 L313.1 131.5 L314.5 131.1 L315.8 130.6 L317.1 130.2 L318.3 129.9 L319.6 129.4 L321.0 129.0 L322.4 128.5 L323.9 128.0 L325.4 127.5 L327.0 127.0 L328.5 126.4 L330.0 125.8 L331.5 125.1 L333.1 124.4 L334.6 123.7 L336.1 123.0 L337.6 122.2 L339.1 121.5 L340.6 120.8 L342.0 120.1 L343.5 119.3 L344.9 118.6 L346.2 118.0 L347.4 117.4 L348.5 116.9 L349.4 116.5 L350.3 116.2 L351.1 115.9 L352.0 115.5 L352.9 115.1 L353.9 114.6 L355.0 114.1 L356.1 113.6 L357.2 113.1 L358.3 112.5 L359.3 111.9 L360.3 111.3 L361.2 110.6 L362.1 109.9 L363.0 109.2 L363.9 108.5 L364.7 107.8 L365.5 107.1 L366.4 106.3 L367.2 105.5 L368.0 104.7 L368.7 103.9 L369.3 103.2 L369.9 102.5 L370.4 101.8 L370.9 101.1 L371.3 100.5 L371.6 99.9 L371.6 99.5 L371.4 99.2 L371.0 98.9 L370.4 98.8 L369.7 98.7 L369.0 98.6 L368.4 98.6 L367.9 98.6 L367.3 98.6 L366.8 98.6 L366.2 98.7 L365.5 98.8 L364.7 99.1 L363.7 99.5 L362.4 99.9 L361.1 100.4 L359.8 101.0 L358.5 101.7 L357.4 102.3 L356.5 103.0 L355.6 103.7 L354.8 104.5 L354.1 105.3 L353.4 106.1 L352.9 106.9 L352.4 107.7 L352.1 108.4 L351.8 109.2 L351.6 109.9 L351.5 110.7 L351.5 111.4 L351.6 112.1 L351.8 112.8 L352.2 113.6 L352.6 114.2 L353.1 114.9 L353.8 115.5 L354.6 116.1 L355.6 116.6 L356.7 117.1 L357.9 117.6 L359.1 118.0 L360.2 118.3 L361.3 118.5 L362.3 118.7 L363.3 118.8 L364.4 118.8 L365.5 118.8 L366.6 118.7 L367.8 118.5 L369.0 118.3 L370.2 117.9 L371.4 117.6 L372.7 117.2 L373.9 116.9 L375.1 116.6 L376.4 116.3 L377.7 116.0 L378.9 115.7 L380.1 115.4 L381.2 115.1 L382.2 114.9 L383.1 114.6 L383.9 114.4 L384.8 114.2 L385.7 114.0 L386.7 113.7 L387.8 113.4 L388.9 113.0 L390.1 112.7 L391.4 112.3 L392.7 111.8 L394.0 111.4 L395.4 111.0 L396.8 110.5 L398.3 110.0 L399.9 109.5 L401.5 109.0 L403.1 108.4 L404.7 107.8 L406.4 107.1 L408.1 106.4 L409.9 105.6 L411.7 104.8 L413.7 103.9 L415.8 102.9 L418.0 101.8 L420.3 100.6 L422.7 99.4 L425.1 98.2 L427.4 97.0 L429.7 95.8 L431.9 94.6 L434.2 93.4 L436.5 92.1 L438.8 90.8 L441.2 89.5 L443.7 88.0 L446.4 86.4 L449.0 84.8 L451.7 83.2 L454.1 81.8 L456.2 80.6 L458.0 79.7 L459.6 79.0 L461.0 78.4 L462.3 77.9 L463.4 77.5 L464.5 77.1 L465.4 76.7 L466.2 76.4 L466.8 76.1 L467.4 75.8 L468.0 75.7 L468.6 75.5 L469.3 75.4 L470.1 75.3 L470.8 75.3 L471.5 75.3 L472.2 75.3 L472.7 75.5 L473.1 75.7 L473.4 75.8 L473.7 76.1 L473.9 76.4 L474.0 77.0 L474.1 77.8 L474.2 79.0 L474.2 80.5 L474.1 82.2 L474.0 84.0 L473.9 85.8 L473.8 87.4 L473.7 88.8 L473.5 90.2 L473.3 91.5 L473.1 92.9 L472.9 94.3 L472.7 95.7 L472.5 97.2 L472.2 98.8 L472.0 100.4 L471.7 102.1 L471.5 103.7 L471.3 105.3 L471.1 106.9 L471.0 108.5 L470.8 110.1 L470.7 111.7 L470.7 113.3 L470.6 114.9 L470.6 116.5 L470.6 118.2 L470.7 119.9 L470.8 121.5 L470.8 123.1 L470.9 124.5 L470.9 125.7 L471.0 126.8 L471.0 127.8 L471.0 128.8 L471.1 130.0 L471.3 131.3 L471.5 132.9 L471.8 134.6 L472.1 136.4 L472.5 138.3 L473.0 140.2 L473.7 142.1 L474.5 144.0 L475.5 146.0 L476.6 147.9 L477.8 149.8 L479.2 151.6 L480.6 153.1 L482.2 154.4 L483.9 155.6 L485.7 156.7 L487.6 157.6 L489.6 158.2 L491.6 158.6 L493.7 158.7 L496.0 158.4 L498.4 158.0 L500.7 157.3 L503.1 156.6 L505.3 155.8 L507.4 154.9 L509.6 153.9 L511.6 152.8 L513.6 151.6 L515.6 150.3 L517.6 149.0 L519.5 147.5 L521.5 146.0 L523.4 144.3 L525.2 142.6 L526.9 141.0 L528.6 139.4 L530.2 137.9 L531.6 136.4 L533.0 135.0 L534.4 133.6 L535.6 132.3 L536.8 131.2 L537.9 130.2 L539.0 129.4 L539.9 128.7 L540.8 128.0 L541.6 127.5 L542.3 127.0 L542.9 126.6 L543.3 126.4 L543.7 126.2 L544.0 126.1 L544.2 126.0 L544.4 125.9"/><path d="M337.0 83.1 L337.5 83.0 L338.2 82.8 L339.0 82.6 L340.0 82.5 L340.9 82.4 L341.9 82.4 L342.8 82.6 L343.8 82.8 L344.8 83.2 L345.9 83.5 L347.0 84.0 L348.2 84.3 L349.5 84.7 L350.8 85.1 L352.1 85.5 L353.5 85.9 L354.9 86.4 L356.4 86.8 L357.8 87.3 L359.3 87.8 L360.8 88.3 L362.3 88.8 L363.9 89.3 L365.3 89.9 L366.8 90.4 L368.2 91.0 L369.7 91.6 L371.1 92.1 L372.5 92.7 L374.0 93.3 L375.4 93.9 L376.8 94.4 L378.2 95.0 L379.7 95.6 L381.1 96.2 L382.6 96.7 L384.1 97.2 L385.6 97.6 L387.2 98.1 L388.7 98.5 L390.3 98.9 L391.9 99.3 L393.4 99.7 L395.0 100.1 L396.6 100.4 L398.2 100.8 L399.8 101.2 L401.2 101.5 L402.6 101.9 L404.0 102.3 L405.2 102.6 L406.5 103.0 L407.8 103.3 L409.2 103.7 L410.7 104.1 L412.2 104.5 L413.8 104.8 L415.3 105.2 L416.9 105.6 L418.5 105.9 L420.2 106.1 L421.8 106.4 L423.5 106.6 L425.2 106.8 L426.9 107.0 L428.5 107.2 L430.1 107.4 L431.8 107.5 L433.4 107.7 L434.9 107.9 L436.4 108.0 L437.7 108.2 L438.9 108.4 L439.9 108.6 L440.8 108.8 L441.7 108.9 L442.6 109.1 L443.6 109.3 L444.7 109.4 L445.9 109.6 L447.1 109.7 L448.3 109.9 L449.5 110.0 L450.7 110.0 L451.9 110.0 L453.0 110.0 L454.1 109.9 L455.2 109.8 L456.4 109.6 L457.5 109.5 L458.6 109.3 L459.7 109.1 L460.8 108.9 L461.9 108.6 L462.9 108.4 L463.8 108.1 L464.7 107.8 L465.5 107.5 L466.3 107.2 L467.0 106.9 L467.5 106.6 L467.8 106.2 L467.8 105.8 L467.5 105.4 L467.1 105.0 L466.6 104.5 L466.1 104.1 L465.5 103.8 L465.1 103.4 L464.7 103.1 L464.2 102.9 L463.7 102.6 L463.0 102.4 L462.2 102.2 L461.1 101.9 L459.8 101.6 L458.4 101.4 L457.0 101.1 L455.6 101.0 L454.3 100.9 L453.1 101.0 L452.0 101.1 L450.9 101.4 L449.9 101.7 L448.9 102.0 L448.0 102.4 L447.2 102.7 L446.5 103.2 L445.8 103.7 L445.3 104.2 L444.8 104.8 L444.4 105.4 L444.1 106.1 L443.9 106.8 L443.8 107.6 L443.8 108.4 L443.9 109.2 L444.1 110.1 L444.5 111.0 L445.1 112.0 L445.7 113.0 L446.5 114.1 L447.2 115.0 L448.0 115.9 L448.8 116.7 L449.6 117.4 L450.4 118.0 L451.2 118.6 L452.2 119.2 L453.2 119.7 L454.2 120.2 L455.4 120.6 L456.6 121.0 L457.8 121.4 L459.1 121.7 L460.3 122.1 L461.5 122.5 L462.7 123.0 L463.9 123.4 L465.1 123.8 L466.3 124.2 L467.4 124.6 L468.4 124.9 L469.2 125.2 L470.1 125.5 L470.9 125.8 L471.8 126.0 L472.8 126.3 L473.9 126.7 L475.0 127.0 L476.2 127.3 L477.5 127.7 L478.8 128.0 L480.2 128.4 L481.6 128.7 L483.0 129.1 L484.6 129.6 L486.1 130.0 L487.8 130.4 L489.4 130.8 L491.2 131.1 L492.9 131.5 L494.7 131.8 L496.6 132.1 L498.6 132.4 L500.8 132.7 L503.1 133.0 L505.6 133.3 L508.1 133.6 L510.8 133.8 L513.4 134.1 L516.0 134.3 L518.6 134.5 L521.2 134.7 L523.7 134.9 L526.3 135.1 L529.0 135.3 L531.7 135.5 L534.6 135.6 L537.7 135.7 L540.8 135.7 L543.9 135.8 L546.7 135.9 L549.1 136.1 L551.2 136.3 L552.9 136.5 L554.4 136.8 L555.7 137.1 L556.9 137.4 L558.0 137.6 L559.0 137.8 L559.8 137.9 L560.5 138.0 L561.1 138.1 L561.7 138.3 L562.3 138.5 L563.0 138.8 L563.7 139.1 L564.3 139.5 L564.9 139.9 L565.4 140.3 L565.8 140.7 L566.0 141.1 L566.2 141.4 L566.3 141.7 L566.3 142.1 L566.1 142.6 L565.7 143.4 L565.1 144.4 L564.3 145.7 L563.3 147.1 L562.3 148.6 L561.2 150.0 L560.3 151.3 L559.4 152.5 L558.5 153.5 L557.6 154.5 L556.7 155.6 L555.8 156.6 L554.9 157.7 L553.8 158.9 L552.8 160.1 L551.7 161.3 L550.6 162.5 L549.5 163.8 L548.5 165.0 L547.5 166.3 L546.5 167.5 L545.5 168.8 L544.6 170.1 L543.6 171.4 L542.7 172.7 L541.8 174.1 L540.9 175.5 L540.1 176.9 L539.3 178.4 L538.5 179.7 L537.8 181.0 L537.1 182.0 L536.6 182.9 L536.0 183.8 L535.5 184.7 L535.0 185.7 L534.4 186.9 L533.8 188.3 L533.1 189.9 L532.3 191.6 L531.6 193.5 L531.0 195.3 L530.6 197.3 L530.3 199.3 L530.1 201.5 L529.9 203.8 L529.9 206.0 L530.1 208.2 L530.5 210.3 L531.1 212.2 L531.8 214.2 L532.8 216.0 L533.9 217.8 L535.2 219.4 L536.7 220.8 L538.5 222.0 L540.6 223.1 L542.8 224.0 L545.1 224.7 L547.5 225.3 L549.8 225.9 L552.1 226.3 L554.4 226.6 L556.7 226.8 L559.1 226.9 L561.4 226.9 L563.8 226.8 L566.2 226.6 L568.7 226.3 L571.2 226.0 L573.7 225.5 L576.0 225.1 L578.3 224.7 L580.4 224.3 L582.4 223.8 L584.4 223.4 L586.3 222.9 L588.0 222.5 L589.6 222.2 L591.0 222.0 L592.4 221.9 L593.6 221.8 L594.7 221.7 L595.6 221.7 L596.5 221.7 L597.2 221.7 L597.7 221.7 L598.1 221.7 L598.4 221.8 L598.6 221.8 L598.8 221.9"/><path d="M447.5 73.7 L448.0 73.9 L448.7 74.1 L449.5 74.4 L450.3 74.8 L451.2 75.2 L452.0 75.8 L452.7 76.4 L453.4 77.2 L454.1 78.0 L454.8 78.9 L455.5 79.9 L456.3 80.8 L457.1 81.8 L458.0 82.9 L458.9 83.9 L459.9 85.1 L460.8 86.2 L461.8 87.3 L462.7 88.5 L463.7 89.7 L464.7 91.0 L465.7 92.2 L466.7 93.5 L467.7 94.8 L468.6 96.0 L469.5 97.3 L470.4 98.5 L471.3 99.8 L472.2 101.0 L473.1 102.3 L474.0 103.5 L474.9 104.8 L475.8 106.1 L476.6 107.3 L477.6 108.6 L478.5 109.8 L479.5 111.0 L480.6 112.3 L481.6 113.5 L482.7 114.7 L483.8 115.8 L484.9 117.0 L486.0 118.2 L487.1 119.4 L488.3 120.6 L489.4 121.7 L490.5 122.9 L491.6 124.0 L492.6 125.0 L493.5 126.1 L494.4 127.1 L495.3 128.0 L496.2 129.1 L497.1 130.1 L498.2 131.2 L499.2 132.4 L500.3 133.5 L501.5 134.7 L502.6 135.8 L503.8 137.0 L505.0 138.1 L506.3 139.2 L507.6 140.3 L508.9 141.4 L510.2 142.4 L511.5 143.5 L512.7 144.5 L514.0 145.5 L515.3 146.5 L516.5 147.5 L517.6 148.5 L518.7 149.3 L519.5 150.1 L520.3 150.8 L520.9 151.4 L521.6 152.0 L522.3 152.7 L523.0 153.4 L523.9 154.1 L524.8 154.9 L525.7 155.7 L526.7 156.4 L527.6 157.2 L528.6 157.9 L529.6 158.5 L530.6 159.1 L531.6 159.6 L532.6 160.1 L533.6 160.6 L534.6 161.1 L535.6 161.5 L536.7 162.0 L537.7 162.4 L538.8 162.7 L539.8 163.1 L540.7 163.3 L541.6 163.6 L542.4 163.8 L543.2 164.0 L544.0 164.1 L544.6 164.0 L545.0 163.9 L545.2 163.6 L545.2 163.1 L545.1 162.5 L544.9 161.8 L544.7 161.2 L544.5 160.6 L544.3 160.1 L544.1 159.6 L543.8 159.2 L543.5 158.7 L543.1 158.1 L542.5 157.4 L541.7 156.7 L540.8 155.7 L539.8 154.7 L538.7 153.8 L537.6 152.9 L536.5 152.1 L535.5 151.6 L534.5 151.1 L533.4 150.7 L532.4 150.4 L531.4 150.1 L530.5 150.0 L529.6 149.9 L528.8 149.8 L528.0 149.9 L527.2 150.0 L526.5 150.2 L525.8 150.6 L525.2 151.0 L524.6 151.5 L524.1 152.0 L523.7 152.7 L523.3 153.5 L523.0 154.3 L522.9 155.3 L522.8 156.5 L522.8 157.7 L522.9 159.0 L523.0 160.2 L523.2 161.3 L523.4 162.4 L523.7 163.4 L524.0 164.4 L524.4 165.4 L524.9 166.3 L525.5 167.3 L526.1 168.3 L526.8 169.3 L527.6 170.3 L528.5 171.3 L529.3 172.2 L530.1 173.2 L530.9 174.2 L531.7 175.2 L532.5 176.3 L533.3 177.2 L534.1 178.2 L534.8 179.1 L535.4 179.9 L536.0 180.6 L536.5 181.3 L537.1 182.0 L537.7 182.7 L538.4 183.5 L539.1 184.4 L539.9 185.3 L540.7 186.2 L541.6 187.2 L542.5 188.2 L543.5 189.2 L544.5 190.3 L545.5 191.4 L546.5 192.6 L547.6 193.8 L548.8 195.0 L550.0 196.2 L551.2 197.5 L552.5 198.7 L553.9 200.0 L555.3 201.3 L556.8 202.6 L558.5 204.0 L560.3 205.5 L562.2 207.1 L564.2 208.7 L566.3 210.4 L568.4 212.0 L570.4 213.6 L572.5 215.2 L574.5 216.7 L576.6 218.3 L578.7 219.9 L580.8 221.4 L583.0 223.0 L585.4 224.7 L587.9 226.5 L590.5 228.2 L593.1 229.9 L595.4 231.6 L597.3 233.0 L598.9 234.3 L600.2 235.4 L601.3 236.5 L602.3 237.4 L603.1 238.3 L604.0 239.1 L604.7 239.8 L605.3 240.3 L605.9 240.8 L606.3 241.2 L606.7 241.6 L607.1 242.2 L607.5 242.8 L607.9 243.4 L608.3 244.1 L608.5 244.7 L608.7 245.3 L608.8 245.9 L608.8 246.3 L608.8 246.7 L608.7 247.0 L608.5 247.3 L608.0 247.7 L607.3 248.1 L606.3 248.7 L604.9 249.3 L603.3 250.0 L601.6 250.6 L600.0 251.3 L598.5 251.8 L597.1 252.3 L595.8 252.7 L594.5 253.1 L593.2 253.5 L591.9 253.9 L590.5 254.3 L589.0 254.7 L587.4 255.1 L585.9 255.6 L584.3 256.0 L582.7 256.5 L581.1 257.0 L579.6 257.5 L578.1 258.0 L576.6 258.6 L575.1 259.1 L573.6 259.7 L572.1 260.3 L570.6 261.0 L569.1 261.7 L567.6 262.5 L566.2 263.2 L564.8 263.9 L563.5 264.6 L562.4 265.2 L561.4 265.6 L560.5 266.0 L559.6 266.5 L558.6 267.1 L557.5 267.8 L556.2 268.7 L554.7 269.6 L553.1 270.6 L551.6 271.8 L550.1 273.1 L548.7 274.5 L547.3 276.0 L545.9 277.7 L544.6 279.5 L543.3 281.4 L542.3 283.4 L541.5 285.3 L541.0 287.3 L540.6 289.3 L540.3 291.4 L540.3 293.5 L540.6 295.6 L541.1 297.6 L541.9 299.6 L543.1 301.5 L544.5 303.5 L546.0 305.4 L547.7 307.2 L549.3 308.9 L551.0 310.5 L552.8 312.0 L554.7 313.4 L556.6 314.8 L558.6 316.0 L560.6 317.3 L562.7 318.4 L565.0 319.5 L567.3 320.5 L569.6 321.5 L571.8 322.4 L573.9 323.3 L575.9 324.1 L577.9 324.8 L579.8 325.5 L581.6 326.1 L583.3 326.7 L584.8 327.3 L586.1 327.9 L587.3 328.5 L588.4 329.1 L589.3 329.7 L590.2 330.2 L590.9 330.6 L591.5 331.0 L591.9 331.3 L592.2 331.5 L592.4 331.7 L592.6 331.9 L592.8 332.0"/><path d="M545.6 125.6 L545.9 126.0 L546.3 126.6 L546.8 127.3 L547.4 128.0 L547.8 128.9 L548.2 129.7 L548.4 130.7 L548.6 131.7 L548.7 132.8 L548.8 133.9 L548.9 135.1 L549.1 136.3 L549.2 137.6 L549.4 139.0 L549.6 140.4 L549.8 141.8 L550.0 143.3 L550.2 144.8 L550.4 146.3 L550.5 147.8 L550.7 149.4 L550.9 151.0 L551.0 152.6 L551.2 154.2 L551.3 155.8 L551.3 157.3 L551.4 158.8 L551.5 160.4 L551.6 161.9 L551.6 163.5 L551.7 165.0 L551.8 166.5 L551.8 168.1 L551.9 169.6 L552.0 171.2 L552.1 172.7 L552.3 174.3 L552.5 175.9 L552.8 177.5 L553.0 179.1 L553.3 180.6 L553.6 182.2 L553.9 183.8 L554.2 185.4 L554.5 187.0 L554.9 188.6 L555.2 190.2 L555.5 191.7 L555.7 193.1 L555.9 194.5 L556.1 195.8 L556.3 197.1 L556.6 198.5 L556.8 199.9 L557.1 201.4 L557.4 202.9 L557.7 204.5 L558.0 206.0 L558.3 207.6 L558.7 209.2 L559.1 210.8 L559.6 212.5 L560.1 214.1 L560.6 215.7 L561.2 217.3 L561.7 218.9 L562.2 220.4 L562.7 222.0 L563.2 223.5 L563.7 225.0 L564.1 226.4 L564.5 227.7 L564.9 228.8 L565.1 229.8 L565.3 230.7 L565.5 231.5 L565.8 232.4 L566.0 233.4 L566.3 234.5 L566.7 235.6 L567.0 236.8 L567.4 238.0 L567.8 239.1 L568.3 240.2 L568.8 241.3 L569.3 242.3 L569.8 243.3 L570.4 244.3 L571.0 245.2 L571.6 246.1 L572.2 247.1 L572.8 248.0 L573.5 248.9 L574.2 249.8 L574.8 250.6 L575.5 251.4 L576.1 252.0 L576.7 252.7 L577.3 253.3 L577.9 253.7 L578.4 254.1 L578.8 254.2 L579.2 254.0 L579.5 253.6 L579.7 253.0 L579.9 252.4 L580.0 251.7 L580.2 251.1 L580.3 250.6 L580.3 250.1 L580.4 249.5 L580.4 248.9 L580.3 248.2 L580.2 247.4 L580.0 246.3 L579.7 245.0 L579.4 243.6 L579.0 242.2 L578.5 240.9 L578.1 239.7 L577.5 238.7 L576.9 237.7 L576.2 236.8 L575.5 236.0 L574.8 235.2 L574.1 234.6 L573.5 234.0 L572.8 233.5 L572.0 233.2 L571.3 232.9 L570.6 232.7 L569.9 232.6 L569.2 232.6 L568.4 232.7 L567.7 232.9 L566.9 233.2 L566.2 233.7 L565.5 234.3 L564.8 235.0 L564.1 235.9 L563.5 236.9 L562.8 238.0 L562.3 239.1 L561.8 240.2 L561.4 241.2 L561.1 242.2 L560.9 243.2 L560.7 244.3 L560.6 245.4 L560.5 246.5 L560.5 247.6 L560.6 248.9 L560.8 250.1 L560.9 251.4 L561.1 252.7 L561.3 254.0 L561.4 255.2 L561.5 256.5 L561.6 257.8 L561.8 259.1 L561.9 260.3 L562.0 261.4 L562.1 262.5 L562.2 263.4 L562.3 264.3 L562.4 265.1 L562.5 266.0 L562.6 267.1 L562.8 268.2 L563.0 269.4 L563.2 270.6 L563.4 271.9 L563.6 273.2 L563.8 274.6 L564.1 276.1 L564.3 277.6 L564.6 279.1 L564.8 280.7 L565.2 282.4 L565.5 284.1 L565.9 285.8 L566.3 287.5 L566.8 289.3 L567.3 291.2 L567.8 293.1 L568.5 295.2 L569.2 297.4 L569.9 299.8 L570.7 302.2 L571.6 304.8 L572.5 307.3 L573.3 309.7 L574.2 312.2 L575.1 314.6 L576.0 317.0 L576.9 319.4 L577.8 321.9 L578.8 324.5 L579.9 327.2 L581.1 330.0 L582.3 332.9 L583.5 335.7 L584.6 338.3 L585.5 340.6 L586.1 342.5 L586.6 344.2 L587.0 345.7 L587.3 347.0 L587.5 348.2 L587.8 349.3 L588.0 350.3 L588.2 351.1 L588.4 351.7 L588.6 352.3 L588.7 352.9 L588.8 353.6 L588.8 354.3 L588.8 355.1 L588.7 355.8 L588.6 356.5 L588.4 357.1 L588.2 357.6 L588.0 358.0 L587.7 358.3 L587.5 358.5 L587.1 358.7 L586.5 358.7 L585.7 358.7 L584.5 358.6 L583.0 358.4 L581.3 358.1 L579.5 357.7 L577.8 357.4 L576.2 357.0 L574.8 356.7 L573.5 356.3 L572.2 356.0 L570.9 355.6 L569.6 355.2 L568.2 354.8 L566.7 354.3 L565.2 353.9 L563.6 353.4 L562.0 352.9 L560.4 352.4 L558.9 352.0 L557.3 351.6 L555.8 351.2 L554.2 350.9 L552.6 350.5 L551.1 350.2 L549.5 350.0 L547.9 349.7 L546.2 349.5 L544.5 349.3 L542.9 349.2 L541.4 349.0 L539.9 348.9 L538.7 348.7 L537.6 348.6 L536.6 348.5 L535.6 348.4 L534.5 348.3 L533.1 348.3 L531.6 348.3 L529.8 348.3 L527.9 348.4 L526.0 348.5 L524.0 348.7 L522.1 349.2 L520.1 349.7 L518.0 350.4 L515.9 351.2 L513.9 352.1 L511.9 353.2 L510.2 354.4 L508.7 355.8 L507.3 357.3 L505.9 358.9 L504.8 360.7 L503.9 362.6 L503.2 364.5 L502.9 366.6 L502.8 368.9 L502.9 371.3 L503.2 373.7 L503.6 376.2 L504.1 378.5 L504.6 380.7 L505.3 383.0 L506.1 385.2 L507.0 387.3 L508.0 389.5 L509.0 391.6 L510.2 393.8 L511.5 395.9 L512.9 398.0 L514.3 400.0 L515.7 402.0 L517.0 403.9 L518.2 405.6 L519.5 407.3 L520.7 408.9 L521.9 410.4 L523.0 411.8 L523.9 413.2 L524.7 414.4 L525.4 415.6 L526.0 416.6 L526.5 417.6 L526.9 418.5 L527.3 419.2 L527.6 419.8 L527.8 420.3 L527.9 420.7 L528.0 421.0 L528.0 421.2 L528.1 421.4"/><path d="M600.0 222.3 L600.0 222.8 L600.1 223.5 L600.2 224.3 L600.2 225.3 L600.1 226.2 L600.0 227.2 L599.7 228.1 L599.3 229.0 L598.8 230.0 L598.3 231.0 L597.7 232.1 L597.1 233.2 L596.6 234.3 L596.0 235.6 L595.4 236.9 L594.8 238.2 L594.2 239.5 L593.5 240.9 L592.8 242.2 L592.1 243.6 L591.4 245.1 L590.7 246.5 L590.0 247.9 L589.2 249.3 L588.5 250.7 L587.7 252.0 L586.9 253.4 L586.2 254.7 L585.4 256.0 L584.6 257.4 L583.9 258.7 L583.1 260.0 L582.3 261.4 L581.5 262.7 L580.8 264.1 L580.0 265.4 L579.3 266.9 L578.7 268.3 L578.0 269.8 L577.4 271.3 L576.7 272.7 L576.1 274.2 L575.5 275.7 L574.9 277.3 L574.3 278.8 L573.7 280.3 L573.2 281.8 L572.6 283.2 L572.0 284.5 L571.5 285.8 L570.9 287.0 L570.4 288.2 L569.9 289.5 L569.3 290.8 L568.7 292.2 L568.1 293.6 L567.5 295.1 L566.9 296.6 L566.4 298.2 L565.8 299.7 L565.3 301.3 L564.8 302.9 L564.4 304.5 L564.0 306.2 L563.5 307.8 L563.1 309.4 L562.7 311.0 L562.3 312.6 L561.9 314.1 L561.5 315.6 L561.1 317.1 L560.8 318.4 L560.4 319.5 L560.1 320.4 L559.8 321.3 L559.5 322.2 L559.2 323.0 L558.9 324.0 L558.6 325.1 L558.3 326.2 L557.9 327.4 L557.6 328.6 L557.4 329.8 L557.1 331.0 L557.0 332.1 L556.9 333.2 L556.8 334.4 L556.7 335.5 L556.7 336.6 L556.7 337.7 L556.7 338.8 L556.8 340.0 L556.8 341.1 L556.9 342.2 L557.0 343.3 L557.2 344.2 L557.3 345.1 L557.5 346.0 L557.7 346.8 L557.9 347.5 L558.1 348.0 L558.5 348.4 L558.8 348.4 L559.3 348.2 L559.8 347.9 L560.3 347.5 L560.8 347.0 L561.2 346.5 L561.6 346.1 L562.0 345.8 L562.3 345.3 L562.6 344.8 L562.9 344.2 L563.3 343.4 L563.7 342.4 L564.1 341.2 L564.6 339.8 L565.1 338.4 L565.4 337.1 L565.6 335.8 L565.7 334.6 L565.7 333.5 L565.7 332.4 L565.5 331.3 L565.3 330.3 L565.1 329.4 L564.8 328.5 L564.5 327.8 L564.1 327.0 L563.7 326.4 L563.2 325.8 L562.6 325.4 L562.0 325.0 L561.3 324.7 L560.6 324.5 L559.8 324.3 L558.9 324.3 L558.0 324.4 L557.0 324.7 L556.0 325.1 L554.9 325.6 L553.7 326.2 L552.7 326.8 L551.7 327.4 L550.8 328.1 L550.0 328.8 L549.3 329.5 L548.6 330.3 L547.9 331.1 L547.2 332.0 L546.6 333.0 L546.0 334.1 L545.4 335.2 L544.9 336.4 L544.4 337.6 L543.8 338.7 L543.2 339.8 L542.6 341.0 L542.0 342.2 L541.5 343.3 L540.9 344.4 L540.4 345.4 L539.9 346.3 L539.5 347.1 L539.1 347.9 L538.7 348.7 L538.3 349.5 L537.8 350.5 L537.4 351.5 L536.9 352.6 L536.4 353.8 L535.9 355.0 L535.3 356.2 L534.8 357.5 L534.2 358.8 L533.6 360.2 L533.0 361.7 L532.3 363.2 L531.7 364.7 L531.1 366.3 L530.5 368.0 L529.9 369.7 L529.3 371.4 L528.7 373.3 L528.2 375.2 L527.6 377.3 L526.9 379.5 L526.3 382.0 L525.7 384.5 L525.0 387.0 L524.4 389.6 L523.8 392.2 L523.2 394.7 L522.6 397.2 L522.1 399.7 L521.5 402.2 L521.0 404.8 L520.4 407.5 L519.9 410.4 L519.4 413.4 L518.8 416.5 L518.3 419.5 L517.8 422.3 L517.3 424.7 L516.8 426.7 L516.3 428.3 L515.8 429.8 L515.4 431.0 L514.9 432.2 L514.5 433.2 L514.2 434.2 L514.0 435.0 L513.8 435.7 L513.6 436.3 L513.4 436.8 L513.1 437.4 L512.7 438.0 L512.3 438.6 L511.8 439.2 L511.3 439.8 L510.8 440.2 L510.4 440.5 L510.0 440.7 L509.7 440.8 L509.3 440.9 L508.9 440.8 L508.4 440.5 L507.7 440.0 L506.8 439.3 L505.6 438.3 L504.4 437.1 L503.1 435.9 L501.8 434.7 L500.7 433.5 L499.7 432.5 L498.7 431.5 L497.9 430.4 L497.0 429.4 L496.1 428.4 L495.1 427.3 L494.1 426.1 L493.1 424.9 L492.0 423.6 L491.0 422.4 L489.9 421.1 L488.8 419.9 L487.7 418.7 L486.6 417.6 L485.5 416.4 L484.3 415.3 L483.2 414.2 L482.0 413.1 L480.8 412.0 L479.5 411.0 L478.2 409.9 L476.9 408.9 L475.7 407.9 L474.5 407.0 L473.6 406.3 L472.7 405.6 L472.0 404.9 L471.2 404.3 L470.3 403.6 L469.1 402.9 L467.8 402.0 L466.3 401.1 L464.7 400.1 L463.0 399.2 L461.2 398.3 L459.4 397.6 L457.4 397.0 L455.3 396.5 L453.1 396.0 L450.8 395.7 L448.7 395.5 L446.6 395.6 L444.5 396.0 L442.5 396.4 L440.5 397.1 L438.6 398.0 L436.8 399.1 L435.2 400.4 L433.8 401.9 L432.4 403.8 L431.3 405.9 L430.2 408.1 L429.2 410.3 L428.4 412.5 L427.6 414.7 L427.0 417.0 L426.5 419.3 L426.0 421.6 L425.7 423.9 L425.4 426.3 L425.3 428.7 L425.2 431.2 L425.2 433.7 L425.3 436.2 L425.4 438.6 L425.5 440.9 L425.6 443.0 L425.8 445.1 L425.9 447.2 L426.1 449.1 L426.2 450.8 L426.3 452.5 L426.3 453.9 L426.3 455.3 L426.2 456.5 L426.1 457.6 L426.0 458.5 L425.9 459.4 L425.8 460.0 L425.7 460.6 L425.6 460.9 L425.5 461.2 L425.4 461.5 L425.3 461.7"/><path d="M593.5 333.0 L593.3 333.4 L592.9 334.1 L592.5 334.8 L592.1 335.6 L591.5 336.4 L590.9 337.1 L590.1 337.7 L589.3 338.3 L588.3 338.8 L587.3 339.4 L586.3 340.0 L585.2 340.6 L584.1 341.3 L583.0 342.0 L581.8 342.8 L580.5 343.6 L579.3 344.4 L578.0 345.1 L576.7 345.9 L575.4 346.7 L574.0 347.6 L572.6 348.4 L571.2 349.2 L569.8 349.9 L568.5 350.7 L567.1 351.4 L565.7 352.1 L564.3 352.8 L563.0 353.5 L561.6 354.2 L560.2 354.9 L558.9 355.6 L557.5 356.3 L556.1 357.0 L554.7 357.7 L553.4 358.5 L552.0 359.3 L550.7 360.2 L549.3 361.1 L548.0 362.0 L546.7 362.9 L545.3 363.8 L544.0 364.7 L542.7 365.7 L541.4 366.7 L540.0 367.6 L538.8 368.6 L537.5 369.4 L536.3 370.3 L535.2 371.0 L534.1 371.7 L533.0 372.5 L531.8 373.2 L530.6 374.1 L529.4 374.9 L528.1 375.8 L526.8 376.7 L525.5 377.7 L524.2 378.7 L522.9 379.7 L521.6 380.7 L520.4 381.8 L519.1 383.0 L517.8 384.1 L516.6 385.3 L515.4 386.4 L514.2 387.5 L513.0 388.6 L511.8 389.7 L510.7 390.7 L509.6 391.7 L508.6 392.6 L507.7 393.4 L506.9 394.0 L506.2 394.6 L505.4 395.1 L504.7 395.7 L503.9 396.4 L503.1 397.1 L502.2 397.9 L501.3 398.7 L500.4 399.5 L499.5 400.4 L498.7 401.3 L498.0 402.1 L497.2 403.0 L496.6 403.9 L495.9 404.9 L495.3 405.8 L494.7 406.7 L494.1 407.7 L493.5 408.7 L492.9 409.6 L492.4 410.6 L492.0 411.6 L491.6 412.4 L491.2 413.3 L490.9 414.1 L490.6 414.9 L490.4 415.6 L490.3 416.2 L490.4 416.6 L490.7 416.9 L491.2 417.0 L491.8 417.0 L492.4 416.9 L493.1 416.7 L493.7 416.6 L494.3 416.5 L494.7 416.3 L495.2 416.1 L495.8 415.9 L496.4 415.5 L497.1 415.1 L498.0 414.4 L499.1 413.6 L500.2 412.8 L501.3 411.8 L502.4 410.9 L503.2 409.9 L503.9 409.0 L504.6 408.0 L505.1 407.1 L505.6 406.1 L506.0 405.1 L506.3 404.3 L506.5 403.4 L506.6 402.6 L506.7 401.7 L506.7 401.0 L506.5 400.2 L506.3 399.5 L506.0 398.9 L505.6 398.2 L505.1 397.7 L504.5 397.1 L503.8 396.6 L503.0 396.3 L502.0 395.9 L500.9 395.7 L499.7 395.5 L498.4 395.4 L497.2 395.4 L496.0 395.4 L495.0 395.4 L493.9 395.6 L492.9 395.8 L491.9 396.1 L490.8 396.4 L489.8 396.8 L488.7 397.3 L487.6 397.9 L486.5 398.5 L485.5 399.2 L484.4 399.9 L483.3 400.6 L482.2 401.2 L481.1 401.9 L479.9 402.5 L478.8 403.2 L477.8 403.8 L476.8 404.4 L475.9 404.9 L475.1 405.3 L474.3 405.8 L473.6 406.2 L472.8 406.7 L471.9 407.2 L470.9 407.9 L470.0 408.5 L468.9 409.2 L467.8 410.0 L466.7 410.7 L465.5 411.5 L464.3 412.3 L463.1 413.2 L461.8 414.0 L460.4 415.0 L459.1 415.9 L457.7 417.0 L456.3 418.0 L454.9 419.1 L453.4 420.3 L451.9 421.5 L450.4 422.8 L448.8 424.3 L447.0 425.8 L445.2 427.5 L443.3 429.3 L441.4 431.1 L439.4 432.9 L437.6 434.7 L435.7 436.5 L433.9 438.3 L432.0 440.1 L430.2 442.0 L428.3 443.9 L426.4 445.8 L424.4 447.9 L422.3 450.2 L420.2 452.5 L418.2 454.8 L416.3 456.9 L414.5 458.6 L413.1 460.0 L411.7 461.1 L410.5 462.1 L409.5 462.9 L408.5 463.6 L407.6 464.3 L406.8 464.9 L406.2 465.5 L405.6 465.9 L405.2 466.3 L404.7 466.7 L404.1 467.0 L403.4 467.3 L402.7 467.6 L402.0 467.8 L401.3 468.0 L400.7 468.1 L400.2 468.1 L399.7 468.1 L399.4 468.0 L399.1 467.9 L398.8 467.6 L398.5 467.1 L398.2 466.3 L397.8 465.2 L397.3 463.7 L396.9 462.1 L396.5 460.3 L396.1 458.6 L395.7 457.0 L395.5 455.6 L395.2 454.2 L395.0 452.9 L394.9 451.6 L394.7 450.2 L394.5 448.7 L394.2 447.2 L394.0 445.6 L393.8 444.0 L393.6 442.4 L393.4 440.7 L393.1 439.1 L392.8 437.6 L392.5 436.0 L392.2 434.4 L391.8 432.8 L391.5 431.3 L391.1 429.7 L390.6 428.2 L390.1 426.6 L389.6 425.0 L389.1 423.4 L388.5 422.0 L388.1 420.6 L387.7 419.4 L387.4 418.4 L387.1 417.4 L386.7 416.5 L386.3 415.4 L385.8 414.2 L385.1 412.8 L384.4 411.2 L383.6 409.5 L382.6 407.8 L381.6 406.1 L380.4 404.5 L379.1 402.9 L377.6 401.3 L376.0 399.7 L374.3 398.3 L372.5 397.0 L370.7 395.9 L368.8 395.1 L366.9 394.4 L364.8 393.9 L362.7 393.6 L360.7 393.5 L358.6 393.7 L356.5 394.3 L354.4 395.1 L352.3 396.2 L350.2 397.5 L348.2 398.9 L346.2 400.3 L344.4 401.7 L342.7 403.3 L341.0 404.9 L339.4 406.6 L337.9 408.4 L336.4 410.3 L334.9 412.2 L333.5 414.3 L332.2 416.4 L330.9 418.5 L329.7 420.6 L328.5 422.6 L327.4 424.4 L326.4 426.3 L325.5 428.1 L324.6 429.8 L323.8 431.3 L323.0 432.7 L322.2 434.0 L321.4 435.1 L320.7 436.1 L320.0 436.9 L319.4 437.7 L318.9 438.3 L318.4 438.8 L318.1 439.2 L317.8 439.5 L317.5 439.7 L317.3 439.8 L317.2 440.0"/><path d="M528.2 422.6 L527.7 422.9 L527.1 423.2 L526.4 423.6 L525.6 424.1 L524.7 424.4 L523.8 424.7 L522.8 424.8 L521.8 424.8 L520.7 424.8 L519.5 424.7 L518.3 424.6 L517.1 424.6 L515.8 424.6 L514.4 424.6 L513.0 424.5 L511.6 424.5 L510.1 424.5 L508.6 424.5 L507.1 424.4 L505.5 424.4 L503.9 424.3 L502.3 424.3 L500.7 424.2 L499.1 424.1 L497.6 424.0 L496.0 423.8 L494.5 423.7 L492.9 423.6 L491.4 423.4 L489.9 423.3 L488.3 423.1 L486.8 422.9 L485.3 422.8 L483.7 422.6 L482.2 422.5 L480.6 422.4 L479.1 422.4 L477.5 422.4 L475.9 422.4 L474.2 422.4 L472.6 422.5 L471.0 422.5 L469.4 422.6 L467.8 422.7 L466.1 422.8 L464.5 422.9 L462.9 423.0 L461.4 423.0 L459.9 423.1 L458.6 423.1 L457.2 423.1 L455.9 423.1 L454.5 423.1 L453.1 423.2 L451.6 423.2 L450.0 423.3 L448.4 423.4 L446.8 423.5 L445.2 423.6 L443.6 423.7 L441.9 423.9 L440.2 424.2 L438.6 424.4 L436.9 424.7 L435.2 425.0 L433.6 425.3 L432.0 425.6 L430.4 425.9 L428.8 426.1 L427.3 426.4 L425.8 426.7 L424.5 426.9 L423.3 427.0 L422.3 427.2 L421.4 427.2 L420.5 427.3 L419.6 427.4 L418.6 427.5 L417.5 427.7 L416.3 427.9 L415.1 428.1 L413.9 428.3 L412.7 428.5 L411.5 428.8 L410.4 429.1 L409.3 429.5 L408.3 429.9 L407.2 430.3 L406.2 430.8 L405.2 431.2 L404.2 431.7 L403.2 432.2 L402.2 432.8 L401.2 433.3 L400.3 433.8 L399.5 434.3 L398.7 434.8 L398.0 435.4 L397.3 435.9 L396.8 436.4 L396.4 436.8 L396.2 437.2 L396.3 437.6 L396.7 438.0 L397.2 438.3 L397.8 438.6 L398.5 438.8 L399.1 439.0 L399.6 439.2 L400.1 439.3 L400.6 439.5 L401.2 439.5 L401.9 439.6 L402.7 439.6 L403.8 439.5 L405.2 439.4 L406.6 439.3 L408.0 439.1 L409.4 438.9 L410.7 438.6 L411.8 438.2 L412.8 437.7 L413.8 437.2 L414.7 436.6 L415.5 436.0 L416.3 435.4 L416.9 434.8 L417.5 434.2 L418.0 433.5 L418.4 432.9 L418.7 432.2 L418.9 431.5 L419.0 430.8 L419.0 430.0 L418.9 429.2 L418.6 428.5 L418.3 427.7 L417.8 426.9 L417.2 426.1 L416.4 425.3 L415.5 424.5 L414.5 423.7 L413.5 423.0 L412.5 422.4 L411.5 421.9 L410.6 421.4 L409.6 421.1 L408.6 420.7 L407.5 420.5 L406.4 420.2 L405.3 420.1 L404.1 420.0 L402.8 419.9 L401.5 419.9 L400.2 419.9 L398.9 419.9 L397.7 419.8 L396.4 419.8 L395.1 419.7 L393.8 419.7 L392.6 419.6 L391.4 419.6 L390.4 419.5 L389.5 419.5 L388.6 419.4 L387.7 419.4 L386.8 419.4 L385.8 419.4 L384.6 419.4 L383.4 419.4 L382.2 419.4 L380.9 419.4 L379.5 419.5 L378.1 419.5 L376.6 419.5 L375.1 419.6 L373.5 419.6 L371.9 419.6 L370.2 419.7 L368.5 419.8 L366.8 420.0 L365.0 420.1 L363.1 420.3 L361.2 420.6 L359.2 420.8 L357.1 421.2 L354.8 421.5 L352.3 422.0 L349.8 422.4 L347.2 422.9 L344.6 423.4 L342.0 423.9 L339.5 424.4 L337.0 424.9 L334.4 425.5 L331.9 426.0 L329.3 426.6 L326.6 427.2 L323.8 427.9 L320.8 428.7 L317.8 429.5 L314.8 430.3 L312.1 431.0 L309.7 431.5 L307.7 431.9 L306.0 432.2 L304.5 432.3 L303.1 432.4 L301.9 432.5 L300.8 432.6 L299.8 432.7 L299.0 432.8 L298.3 432.9 L297.7 433.0 L297.1 433.0 L296.4 432.9 L295.7 432.9 L294.9 432.7 L294.2 432.6 L293.5 432.3 L292.9 432.1 L292.5 431.8 L292.1 431.5 L291.9 431.3 L291.7 431.0 L291.6 430.6 L291.6 430.0 L291.8 429.2 L292.1 428.0 L292.5 426.6 L293.0 424.9 L293.6 423.2 L294.2 421.6 L294.8 420.1 L295.3 418.7 L295.8 417.4 L296.4 416.2 L297.0 415.0 L297.6 413.7 L298.2 412.4 L298.8 411.0 L299.5 409.6 L300.2 408.1 L300.9 406.6 L301.6 405.1 L302.2 403.6 L302.8 402.1 L303.4 400.6 L304.0 399.1 L304.6 397.6 L305.1 396.1 L305.6 394.6 L306.1 393.0 L306.5 391.4 L306.9 389.8 L307.3 388.2 L307.7 386.7 L308.0 385.3 L308.3 384.1 L308.6 383.0 L308.9 382.1 L309.1 381.1 L309.3 380.0 L309.5 378.6 L309.8 377.1 L310.0 375.3 L310.2 373.5 L310.4 371.6 L310.4 369.6 L310.3 367.6 L310.0 365.6 L309.6 363.4 L309.1 361.2 L308.5 359.0 L307.7 357.0 L306.8 355.1 L305.6 353.4 L304.3 351.7 L302.9 350.2 L301.3 348.8 L299.6 347.7 L297.8 346.7 L295.7 346.1 L293.5 345.6 L291.1 345.4 L288.6 345.4 L286.2 345.4 L283.8 345.6 L281.5 345.8 L279.2 346.1 L276.9 346.6 L274.6 347.2 L272.4 347.9 L270.1 348.6 L267.8 349.5 L265.5 350.4 L263.2 351.5 L261.0 352.6 L258.9 353.7 L256.8 354.7 L254.9 355.7 L253.1 356.7 L251.3 357.7 L249.7 358.7 L248.1 359.5 L246.7 360.3 L245.3 360.9 L244.1 361.4 L242.9 361.8 L241.9 362.2 L241.0 362.5 L240.2 362.8 L239.5 363.0 L239.0 363.1 L238.6 363.2 L238.3 363.2 L238.1 363.2 L237.9 363.2"/><path d="M424.8 462.7 L424.3 462.7 L423.6 462.7 L422.7 462.6 L421.8 462.5 L420.9 462.3 L420.0 462.0 L419.1 461.6 L418.2 461.1 L417.3 460.5 L416.4 459.8 L415.4 459.1 L414.4 458.4 L413.3 457.7 L412.2 456.9 L411.0 456.1 L409.8 455.3 L408.5 454.5 L407.3 453.7 L406.0 452.8 L404.7 451.9 L403.4 451.0 L402.1 450.1 L400.8 449.2 L399.5 448.2 L398.3 447.3 L397.1 446.4 L395.8 445.4 L394.6 444.5 L393.4 443.5 L392.2 442.5 L391.0 441.6 L389.8 440.6 L388.6 439.7 L387.4 438.7 L386.2 437.8 L384.9 436.8 L383.6 436.0 L382.2 435.1 L380.9 434.2 L379.5 433.4 L378.1 432.6 L376.8 431.7 L375.4 430.9 L373.9 430.1 L372.5 429.3 L371.1 428.5 L369.7 427.7 L368.4 426.9 L367.1 426.2 L366.0 425.5 L364.8 424.8 L363.7 424.1 L362.5 423.3 L361.3 422.6 L360.0 421.8 L358.7 421.0 L357.3 420.2 L355.9 419.4 L354.5 418.7 L353.0 417.9 L351.5 417.2 L350.0 416.5 L348.4 415.8 L346.8 415.1 L345.3 414.5 L343.8 413.8 L342.3 413.2 L340.8 412.6 L339.3 412.0 L337.8 411.4 L336.5 410.8 L335.3 410.3 L334.2 409.8 L333.3 409.3 L332.5 408.9 L331.7 408.5 L330.8 408.0 L329.9 407.6 L328.9 407.1 L327.8 406.6 L326.7 406.2 L325.6 405.7 L324.4 405.2 L323.3 404.9 L322.2 404.5 L321.1 404.3 L320.0 404.0 L318.9 403.8 L317.8 403.6 L316.7 403.5 L315.6 403.3 L314.4 403.2 L313.3 403.1 L312.2 403.0 L311.1 403.0 L310.2 403.0 L309.3 403.0 L308.4 403.1 L307.5 403.1 L306.8 403.2 L306.2 403.4 L305.9 403.7 L305.8 404.1 L305.9 404.5 L306.1 405.1 L306.5 405.6 L306.9 406.2 L307.3 406.7 L307.6 407.1 L308.0 407.5 L308.3 407.9 L308.8 408.3 L309.4 408.7 L310.1 409.2 L311.1 409.7 L312.2 410.3 L313.5 411.0 L314.8 411.6 L316.1 412.2 L317.3 412.6 L318.4 412.9 L319.6 413.0 L320.7 413.1 L321.8 413.1 L322.8 413.1 L323.7 413.0 L324.6 412.8 L325.4 412.6 L326.2 412.3 L326.9 412.0 L327.5 411.6 L328.0 411.1 L328.5 410.5 L328.9 409.9 L329.2 409.2 L329.5 408.4 L329.6 407.6 L329.6 406.7 L329.5 405.7 L329.3 404.5 L328.9 403.4 L328.5 402.2 L328.0 401.0 L327.6 400.0 L327.0 399.0 L326.5 398.1 L325.9 397.3 L325.2 396.5 L324.5 395.7 L323.7 394.9 L322.8 394.1 L321.8 393.4 L320.7 392.7 L319.7 392.0 L318.6 391.3 L317.5 390.6 L316.5 389.8 L315.4 389.1 L314.4 388.3 L313.3 387.6 L312.3 386.9 L311.4 386.2 L310.5 385.6 L309.8 385.1 L309.1 384.6 L308.4 384.1 L307.6 383.5 L306.7 383.0 L305.8 382.4 L304.8 381.7 L303.7 381.1 L302.6 380.4 L301.4 379.7 L300.2 379.0 L299.0 378.2 L297.7 377.4 L296.3 376.6 L294.9 375.7 L293.5 374.9 L292.0 374.1 L290.4 373.2 L288.8 372.4 L287.2 371.6 L285.4 370.7 L283.6 369.9 L281.6 369.0 L279.5 368.1 L277.2 367.1 L274.8 366.1 L272.4 365.1 L269.9 364.1 L267.5 363.2 L265.1 362.2 L262.7 361.3 L260.2 360.4 L257.8 359.5 L255.3 358.6 L252.7 357.6 L250.0 356.7 L247.1 355.7 L244.1 354.8 L241.2 353.9 L238.5 353.0 L236.2 352.1 L234.3 351.4 L232.7 350.6 L231.4 349.9 L230.2 349.3 L229.1 348.7 L228.1 348.1 L227.2 347.7 L226.5 347.4 L225.8 347.1 L225.3 346.8 L224.8 346.5 L224.2 346.1 L223.7 345.6 L223.1 345.1 L222.6 344.6 L222.1 344.0 L221.8 343.5 L221.5 343.0 L221.4 342.6 L221.3 342.2 L221.3 341.9 L221.5 341.5 L221.8 341.1 L222.4 340.4 L223.2 339.6 L224.4 338.6 L225.7 337.5 L227.1 336.4 L228.5 335.3 L229.8 334.4 L231.0 333.5 L232.1 332.8 L233.3 332.0 L234.4 331.3 L235.6 330.6 L236.8 329.8 L238.1 328.9 L239.5 328.1 L240.8 327.2 L242.2 326.3 L243.6 325.5 L245.0 324.5 L246.3 323.6 L247.6 322.7 L248.9 321.7 L250.2 320.8 L251.4 319.8 L252.7 318.8 L253.9 317.7 L255.2 316.6 L256.4 315.5 L257.6 314.3 L258.7 313.3 L259.7 312.3 L260.7 311.4 L261.5 310.7 L262.2 310.0 L263.0 309.3 L263.7 308.5 L264.6 307.5 L265.7 306.3 L266.8 305.0 L268.0 303.6 L269.2 302.0 L270.3 300.4 L271.2 298.6 L272.1 296.8 L272.9 294.7 L273.7 292.6 L274.4 290.4 L274.8 288.3 L275.0 286.2 L275.0 284.2 L274.8 282.1 L274.4 280.0 L273.8 278.0 L273.0 276.1 L272.0 274.3 L270.6 272.6 L268.9 271.1 L267.1 269.6 L265.0 268.2 L262.9 266.9 L260.9 265.8 L258.8 264.7 L256.7 263.8 L254.5 262.9 L252.3 262.2 L250.0 261.5 L247.7 260.9 L245.3 260.4 L242.8 260.0 L240.4 259.7 L237.9 259.4 L235.5 259.1 L233.2 258.9 L231.1 258.7 L229.0 258.6 L227.0 258.5 L225.1 258.4 L223.3 258.2 L221.7 258.1 L220.2 257.9 L218.9 257.6 L217.7 257.4 L216.6 257.1 L215.7 256.9 L214.9 256.7 L214.2 256.5 L213.7 256.3 L213.4 256.2 L213.1 256.0 L212.9 255.9 L212.7 255.8"/><path d="M316.1 440.6 L315.7 440.3 L315.1 439.8 L314.4 439.4 L313.7 438.8 L313.0 438.1 L312.4 437.4 L311.9 436.5 L311.5 435.6 L311.1 434.6 L310.7 433.5 L310.2 432.4 L309.7 431.3 L309.2 430.1 L308.6 428.9 L308.1 427.6 L307.5 426.2 L306.9 424.9 L306.3 423.5 L305.7 422.1 L305.1 420.6 L304.5 419.2 L303.9 417.7 L303.3 416.2 L302.7 414.7 L302.2 413.3 L301.6 411.8 L301.1 410.3 L300.6 408.9 L300.1 407.4 L299.6 406.0 L299.1 404.5 L298.6 403.1 L298.2 401.6 L297.7 400.1 L297.1 398.7 L296.6 397.2 L295.9 395.8 L295.3 394.3 L294.6 392.9 L293.9 391.4 L293.2 390.0 L292.5 388.5 L291.7 387.1 L291.0 385.6 L290.2 384.2 L289.4 382.7 L288.7 381.3 L288.0 380.0 L287.4 378.7 L286.8 377.4 L286.2 376.2 L285.6 375.0 L285.0 373.8 L284.4 372.5 L283.7 371.1 L283.0 369.7 L282.3 368.3 L281.6 366.9 L280.8 365.5 L280.0 364.0 L279.1 362.6 L278.2 361.2 L277.2 359.8 L276.3 358.4 L275.3 357.0 L274.4 355.6 L273.5 354.3 L272.6 353.0 L271.6 351.6 L270.7 350.3 L269.9 349.1 L269.2 348.0 L268.5 347.0 L268.0 346.2 L267.6 345.3 L267.1 344.6 L266.7 343.8 L266.1 342.9 L265.5 341.9 L264.9 341.0 L264.2 339.9 L263.5 338.9 L262.8 337.9 L262.0 337.0 L261.3 336.2 L260.5 335.3 L259.7 334.5 L258.9 333.7 L258.0 333.0 L257.2 332.3 L256.3 331.5 L255.5 330.8 L254.6 330.1 L253.7 329.5 L252.8 328.9 L252.0 328.4 L251.2 327.9 L250.4 327.4 L249.7 327.0 L249.0 326.7 L248.5 326.6 L248.0 326.6 L247.7 326.9 L247.5 327.3 L247.5 327.9 L247.5 328.6 L247.5 329.3 L247.6 329.9 L247.6 330.4 L247.7 331.0 L247.8 331.5 L248.0 332.1 L248.2 332.7 L248.6 333.5 L249.1 334.5 L249.7 335.6 L250.4 336.9 L251.2 338.1 L252.0 339.3 L252.8 340.3 L253.6 341.1 L254.5 341.9 L255.4 342.5 L256.3 343.1 L257.1 343.6 L258.0 344.1 L258.8 344.4 L259.6 344.7 L260.4 344.9 L261.2 344.9 L261.9 344.9 L262.6 344.8 L263.3 344.6 L264.0 344.3 L264.7 343.8 L265.3 343.3 L265.9 342.7 L266.4 342.0 L266.8 341.0 L267.2 340.0 L267.6 338.8 L267.9 337.6 L268.1 336.4 L268.2 335.2 L268.3 334.1 L268.3 333.1 L268.3 332.0 L268.2 331.0 L268.0 329.9 L267.7 328.8 L267.4 327.7 L267.0 326.5 L266.5 325.4 L265.9 324.2 L265.4 323.0 L264.9 321.9 L264.4 320.7 L263.9 319.5 L263.5 318.3 L263.0 317.1 L262.5 315.9 L262.1 314.9 L261.7 313.9 L261.4 313.1 L261.0 312.3 L260.7 311.4 L260.3 310.6 L259.9 309.6 L259.4 308.6 L258.9 307.5 L258.4 306.4 L257.8 305.2 L257.2 304.0 L256.6 302.7 L256.0 301.4 L255.3 300.1 L254.6 298.6 L253.9 297.2 L253.2 295.7 L252.3 294.2 L251.5 292.6 L250.6 291.1 L249.6 289.5 L248.6 287.8 L247.5 286.1 L246.4 284.3 L245.1 282.4 L243.7 280.3 L242.2 278.2 L240.7 276.0 L239.1 273.9 L237.6 271.7 L236.1 269.6 L234.6 267.6 L233.0 265.5 L231.5 263.4 L229.9 261.3 L228.2 259.1 L226.4 256.9 L224.4 254.5 L222.4 252.0 L220.5 249.7 L218.7 247.5 L217.3 245.6 L216.1 243.9 L215.2 242.4 L214.4 241.1 L213.7 239.9 L213.2 238.8 L212.6 237.8 L212.1 237.0 L211.7 236.3 L211.3 235.7 L211.0 235.2 L210.7 234.6 L210.4 234.0 L210.2 233.3 L210.0 232.6 L209.9 231.8 L209.8 231.1 L209.8 230.5 L209.9 230.0 L210.0 229.5 L210.1 229.2 L210.3 228.9 L210.6 228.7 L211.1 228.5 L211.9 228.2 L213.1 228.0 L214.6 227.8 L216.3 227.6 L218.1 227.4 L219.9 227.3 L221.5 227.2 L222.9 227.1 L224.3 227.1 L225.7 227.1 L227.0 227.1 L228.4 227.1 L229.9 227.1 L231.4 227.1 L233.0 227.1 L234.6 227.1 L236.3 227.1 L237.9 227.1 L239.6 227.1 L241.2 227.0 L242.8 227.0 L244.4 226.9 L246.0 226.7 L247.6 226.6 L249.2 226.4 L250.8 226.2 L252.4 225.9 L254.1 225.6 L255.7 225.3 L257.2 225.0 L258.6 224.8 L259.9 224.5 L260.9 224.4 L261.9 224.2 L262.9 224.0 L264.0 223.8 L265.3 223.4 L266.8 222.9 L268.5 222.4 L270.3 221.9 L272.1 221.2 L273.9 220.4 L275.6 219.5 L277.4 218.4 L279.2 217.1 L281.0 215.8 L282.7 214.3 L284.3 212.7 L285.6 211.1 L286.6 209.4 L287.6 207.5 L288.4 205.6 L289.0 203.5 L289.4 201.5 L289.4 199.4 L289.2 197.3 L288.6 195.1 L287.8 192.8 L286.9 190.6 L285.8 188.4 L284.7 186.3 L283.5 184.3 L282.3 182.3 L280.9 180.4 L279.4 178.6 L277.8 176.8 L276.2 175.0 L274.5 173.3 L272.7 171.7 L270.7 170.0 L268.8 168.4 L266.9 166.9 L265.2 165.5 L263.5 164.2 L261.8 162.9 L260.1 161.8 L258.6 160.6 L257.2 159.6 L255.9 158.6 L254.8 157.6 L253.8 156.7 L252.9 155.8 L252.2 155.1 L251.5 154.3 L250.9 153.7 L250.5 153.2 L250.2 152.8 L249.9 152.5 L249.8 152.2 L249.7 152.0 L249.5 151.8"/><path d="M236.7 363.2 L236.5 362.7 L236.2 362.0 L235.9 361.2 L235.6 360.4 L235.4 359.4 L235.3 358.5 L235.3 357.5 L235.5 356.5 L235.6 355.4 L235.9 354.3 L236.1 353.1 L236.3 351.9 L236.5 350.6 L236.7 349.3 L236.9 347.9 L237.2 346.4 L237.4 345.0 L237.6 343.5 L237.9 342.0 L238.2 340.4 L238.5 338.9 L238.8 337.3 L239.1 335.7 L239.4 334.2 L239.7 332.7 L240.1 331.1 L240.4 329.6 L240.8 328.1 L241.2 326.6 L241.5 325.1 L241.9 323.6 L242.3 322.2 L242.6 320.7 L243.0 319.2 L243.4 317.7 L243.7 316.1 L243.9 314.6 L244.2 313.0 L244.4 311.4 L244.6 309.8 L244.8 308.2 L244.9 306.6 L245.1 305.0 L245.2 303.3 L245.4 301.7 L245.5 300.1 L245.7 298.5 L245.8 297.0 L246.0 295.5 L246.1 294.2 L246.3 292.9 L246.5 291.5 L246.7 290.2 L246.8 288.8 L247.0 287.3 L247.1 285.7 L247.3 284.1 L247.4 282.5 L247.6 280.9 L247.6 279.2 L247.7 277.6 L247.7 275.9 L247.6 274.2 L247.6 272.5 L247.5 270.8 L247.5 269.2 L247.5 267.6 L247.4 265.9 L247.3 264.3 L247.3 262.7 L247.2 261.3 L247.2 259.9 L247.2 258.8 L247.3 257.7 L247.3 256.8 L247.4 255.9 L247.4 255.0 L247.4 254.0 L247.4 252.8 L247.4 251.7 L247.4 250.4 L247.4 249.2 L247.3 248.0 L247.2 246.8 L247.0 245.7 L246.8 244.6 L246.5 243.4 L246.3 242.3 L246.0 241.3 L245.7 240.2 L245.3 239.1 L245.0 238.0 L244.6 237.0 L244.2 235.9 L243.8 235.0 L243.4 234.1 L243.0 233.3 L242.6 232.5 L242.2 231.8 L241.8 231.1 L241.4 230.7 L241.0 230.5 L240.6 230.5 L240.2 230.8 L239.8 231.3 L239.5 231.9 L239.1 232.5 L238.8 233.0 L238.6 233.5 L238.4 234.0 L238.2 234.5 L238.0 235.0 L237.9 235.7 L237.8 236.6 L237.7 237.7 L237.6 239.0 L237.5 240.4 L237.5 241.9 L237.5 243.3 L237.6 244.6 L237.9 245.7 L238.2 246.8 L238.6 247.9 L239.0 248.8 L239.5 249.7 L240.0 250.6 L240.5 251.3 L241.0 252.0 L241.6 252.5 L242.2 253.0 L242.8 253.4 L243.5 253.7 L244.2 253.9 L244.9 254.0 L245.7 254.0 L246.5 253.9 L247.3 253.7 L248.2 253.3 L249.0 252.8 L249.9 252.1 L250.9 251.3 L251.8 250.4 L252.6 249.5 L253.4 248.7 L254.0 247.8 L254.6 246.9 L255.1 246.0 L255.6 245.1 L256.0 244.1 L256.4 243.0 L256.7 241.9 L257.0 240.7 L257.2 239.4 L257.4 238.1 L257.6 236.9 L257.8 235.6 L258.0 234.4 L258.3 233.1 L258.5 231.8 L258.7 230.6 L259.0 229.4 L259.2 228.2 L259.4 227.2 L259.5 226.3 L259.7 225.4 L259.9 224.6 L260.0 223.7 L260.2 222.6 L260.3 221.5 L260.5 220.3 L260.7 219.1 L260.8 217.8 L261.0 216.4 L261.1 215.0 L261.3 213.6 L261.5 212.1 L261.7 210.5 L261.9 208.9 L262.0 207.2 L262.2 205.5 L262.3 203.8 L262.4 202.0 L262.4 200.1 L262.5 198.2 L262.5 196.2 L262.5 194.0 L262.4 191.7 L262.4 189.2 L262.3 186.6 L262.2 184.0 L262.0 181.3 L261.9 178.7 L261.8 176.1 L261.6 173.5 L261.4 171.0 L261.3 168.4 L261.0 165.7 L260.8 163.0 L260.5 160.1 L260.2 157.0 L259.8 153.9 L259.4 150.9 L259.1 148.1 L258.9 145.7 L258.9 143.6 L258.9 141.9 L258.9 140.4 L259.0 139.0 L259.1 137.8 L259.2 136.7 L259.2 135.7 L259.2 134.8 L259.2 134.1 L259.3 133.5 L259.3 132.9 L259.5 132.3 L259.6 131.6 L259.9 130.9 L260.2 130.2 L260.5 129.5 L260.8 129.0 L261.2 128.5 L261.5 128.2 L261.8 128.0 L262.1 127.9 L262.5 127.9 L263.0 128.0 L263.8 128.2 L264.9 128.7 L266.3 129.3 L267.9 130.1 L269.5 130.9 L271.0 131.7 L272.4 132.5 L273.7 133.2 L274.9 133.9 L276.0 134.6 L277.2 135.4 L278.3 136.1 L279.5 136.9 L280.8 137.8 L282.2 138.7 L283.5 139.6 L284.9 140.5 L286.3 141.3 L287.7 142.2 L289.1 143.0 L290.5 143.8 L291.9 144.6 L293.3 145.4 L294.7 146.1 L296.1 146.8 L297.6 147.5 L299.1 148.2 L300.7 148.8 L302.2 149.4 L303.7 150.0 L305.0 150.5 L306.1 151.0 L307.1 151.5 L308.0 151.9 L309.0 152.2 L310.1 152.6 L311.3 153.0 L312.9 153.4 L314.5 153.9 L316.3 154.4 L318.2 154.8 L320.2 155.1 L322.2 155.3 L324.2 155.3 L326.4 155.3 L328.7 155.1 L330.9 154.8 L333.1 154.3 L335.0 153.6 L336.9 152.7 L338.7 151.7 L340.4 150.5 L342.0 149.1 L343.4 147.6 L344.6 145.9 L345.6 143.9 L346.3 141.8 L346.8 139.5 L347.3 137.0 L347.5 134.6 L347.7 132.2 L347.9 129.9 L347.8 127.6 L347.7 125.3 L347.4 122.9 L347.1 120.6 L346.7 118.2 L346.2 115.9 L345.5 113.5 L344.8 111.0 L344.0 108.7 L343.2 106.4 L342.5 104.2 L341.8 102.2 L341.1 100.2 L340.3 98.4 L339.6 96.6 L339.0 94.9 L338.5 93.4 L338.0 92.0 L337.7 90.7 L337.4 89.5 L337.2 88.4 L337.1 87.4 L336.9 86.6 L336.8 86.0 L336.8 85.4 L336.8 85.0 L336.8 84.7 L336.8 84.5 L336.8 84.3"/><path d="M211.7 255.1 L211.8 254.6 L211.9 253.9 L212.1 253.1 L212.3 252.2 L212.7 251.3 L213.1 250.4 L213.6 249.6 L214.3 248.8 L215.0 248.0 L215.8 247.2 L216.6 246.4 L217.5 245.4 L218.4 244.5 L219.3 243.4 L220.2 242.4 L221.2 241.3 L222.1 240.2 L223.1 239.1 L224.2 238.0 L225.2 236.8 L226.3 235.6 L227.4 234.5 L228.5 233.3 L229.6 232.2 L230.7 231.1 L231.9 230.0 L233.0 228.9 L234.1 227.9 L235.2 226.8 L236.3 225.7 L237.4 224.7 L238.6 223.6 L239.7 222.6 L240.8 221.5 L241.9 220.4 L243.0 219.3 L244.1 218.1 L245.1 216.9 L246.2 215.7 L247.2 214.5 L248.2 213.2 L249.2 212.0 L250.2 210.7 L251.3 209.4 L252.3 208.1 L253.2 206.8 L254.2 205.6 L255.2 204.4 L256.1 203.2 L256.9 202.2 L257.8 201.2 L258.7 200.2 L259.5 199.1 L260.5 198.0 L261.4 196.8 L262.4 195.6 L263.4 194.3 L264.4 193.1 L265.3 191.8 L266.3 190.4 L267.2 189.1 L268.1 187.6 L269.0 186.2 L269.9 184.7 L270.8 183.3 L271.6 181.9 L272.5 180.5 L273.3 179.1 L274.1 177.7 L274.9 176.4 L275.7 175.1 L276.4 174.0 L277.0 173.0 L277.6 172.1 L278.1 171.4 L278.7 170.7 L279.2 169.9 L279.8 169.0 L280.4 168.1 L281.0 167.1 L281.7 166.1 L282.3 165.0 L282.9 163.9 L283.4 162.9 L283.9 161.8 L284.3 160.8 L284.7 159.7 L285.1 158.7 L285.4 157.6 L285.8 156.5 L286.1 155.4 L286.3 154.3 L286.6 153.2 L286.8 152.1 L287.0 151.1 L287.1 150.2 L287.2 149.3 L287.3 148.4 L287.4 147.5 L287.4 146.8 L287.3 146.2 L287.1 145.8 L286.7 145.7 L286.2 145.7 L285.7 145.9 L285.0 146.2 L284.4 146.5 L283.9 146.8 L283.4 147.1 L283.0 147.3 L282.5 147.6 L282.1 148.0 L281.6 148.5 L281.0 149.2 L280.4 150.1 L279.6 151.1 L278.7 152.3 L277.9 153.5 L277.2 154.7 L276.6 155.8 L276.2 156.9 L275.9 158.0 L275.6 159.1 L275.5 160.2 L275.4 161.2 L275.3 162.1 L275.4 163.0 L275.5 163.9 L275.6 164.7 L275.9 165.4 L276.2 166.1 L276.6 166.7 L277.1 167.2 L277.7 167.7 L278.3 168.1 L279.1 168.5 L279.9 168.7 L280.7 168.9 L281.8 168.9 L282.9 168.8 L284.1 168.7 L285.3 168.4 L286.5 168.1 L287.6 167.8 L288.7 167.4 L289.6 167.0 L290.6 166.5 L291.5 166.0 L292.3 165.3 L293.2 164.7 L294.1 163.9 L295.0 163.0 L295.9 162.1 L296.7 161.1 L297.6 160.1 L298.4 159.2 L299.3 158.3 L300.2 157.3 L301.1 156.4 L302.0 155.5 L302.8 154.6 L303.6 153.7 L304.3 153.0 L304.9 152.3 L305.5 151.7 L306.1 151.1 L306.8 150.4 L307.4 149.6 L308.2 148.7 L309.0 147.8 L309.8 146.9 L310.6 145.9 L311.5 144.8 L312.3 143.7 L313.3 142.6 L314.3 141.4 L315.3 140.2 L316.3 139.0 L317.3 137.6 L318.4 136.3 L319.4 134.8 L320.5 133.4 L321.5 131.9 L322.6 130.3 L323.7 128.6 L324.9 126.8 L326.1 124.8 L327.4 122.6 L328.7 120.4 L330.0 118.1 L331.4 115.8 L332.7 113.5 L333.9 111.3 L335.2 109.1 L336.4 106.8 L337.7 104.5 L338.9 102.2 L340.2 99.8 L341.5 97.2 L342.9 94.4 L344.3 91.6 L345.6 88.8 L346.9 86.3 L348.0 84.2 L349.1 82.4 L350.0 81.0 L350.9 79.7 L351.7 78.6 L352.4 77.7 L353.1 76.7 L353.7 75.9 L354.1 75.2 L354.5 74.6 L354.9 74.1 L355.2 73.7 L355.7 73.2 L356.2 72.7 L356.8 72.2 L357.4 71.8 L358.0 71.4 L358.6 71.1 L359.1 71.0 L359.6 70.9 L359.9 70.8 L360.3 70.9 L360.6 71.1 L361.0 71.5 L361.6 72.1 L362.3 73.1 L363.1 74.4 L364.0 75.9 L364.9 77.4 L365.7 79.0 L366.5 80.4 L367.2 81.7 L367.8 82.9 L368.3 84.1 L368.9 85.4 L369.5 86.6 L370.1 88.0 L370.7 89.4 L371.3 90.8 L372.0 92.3 L372.7 93.8 L373.4 95.3 L374.1 96.8 L374.8 98.2 L375.5 99.7 L376.3 101.1 L377.1 102.5 L377.9 103.9 L378.7 105.2 L379.6 106.6 L380.5 108.0 L381.4 109.4 L382.4 110.7 L383.3 112.0 L384.1 113.2 L384.8 114.2 L385.4 115.1 L386.0 115.9 L386.6 116.7 L387.3 117.6 L388.1 118.7 L389.2 119.9 L390.3 121.2 L391.6 122.6 L392.9 123.9 L394.4 125.3 L396.0 126.5 L397.7 127.6 L399.6 128.7 L401.6 129.8 L403.6 130.7 L405.7 131.5 L407.7 132.0 L409.8 132.2 L411.9 132.4 L414.0 132.3 L416.0 132.0 L418.1 131.4 L420.0 130.7 L421.8 129.5 L423.6 128.1 L425.3 126.5 L427.0 124.7 L428.5 122.8 L430.0 120.9 L431.3 119.0 L432.6 117.0 L433.7 115.0 L434.7 112.9 L435.7 110.7 L436.7 108.5 L437.5 106.2 L438.3 103.9 L438.9 101.4 L439.6 99.0 L440.2 96.7 L440.7 94.5 L441.2 92.4 L441.7 90.3 L442.1 88.4 L442.4 86.5 L442.8 84.7 L443.2 83.2 L443.6 81.8 L444.0 80.5 L444.4 79.3 L444.8 78.3 L445.2 77.4 L445.5 76.7 L445.8 76.0 L446.1 75.6 L446.3 75.2 L446.5 75.0 L446.6 74.8 L446.7 74.6"/></g>
<defs><linearGradient id="lg" gradientUnits="userSpaceOnUse" x1="407.5" y1="266.5" x2="557" y2="189.5"><stop offset="0" stop-color="#80405a"/><stop offset="1" stop-color="#ffff00"/></linearGradient><linearGradient id="lg2" gradientUnits="userSpaceOnUse" x1="559" y1="0" x2="568" y2="0"><stop offset="0" stop-color="#ff99ff"/><stop offset="1" stop-color="#00ffff"/></linearGradient><linearGradient id="lg3" gradientUnits="userSpaceOnUse" x1="562" y1="0" x2="568" y2="0"><stop offset="0" stop-color="#ffff00"/><stop offset="1" stop-color="#00ffff"/></linearGradient></defs><path d="M407.5 266.5L557 189.5" stroke="url(#lg)"/><rect x="396.5" y="255.5" width="22" height="22" fill="#000" stroke="#00ff00"/><path d="M434.5 247.5 L434.5 255.5M440.5 247.5 L446.5 247.5 L440.5 255.5M450.5 247.5 L450.5 253.5 L456.5 253.5M454.5 247.5 L454.5 255.5M460.5 253.5 L462.5 251.5 L464.5 253.5 L462.5 255.5 L460.5 253.5M474.5 247.5 L468.5 247.5 L468.5 255.5 L474.5 255.5 L474.5 251.5 L468.5 251.5M480.5 247.5 L480.5 255.5M486.5 247.5 L486.5 253.5 L492.5 253.5M490.5 247.5 L490.5 255.5M512.5 255.5 L506.5 255.5 L506.5 247.5 L512.5 247.5 L512.5 253.5 L509.0 253.5 L509.0 250.0 L511.0 250.0 L511.0 253.5M522.5 247.5 L526.5 247.5 L528.5 249.5 L528.5 255.5 L522.5 255.5 L522.5 247.5M532.5 247.5 L534.5 247.5 L534.5 249.5 L532.5 249.5 L532.5 247.5M538.5 253.5 L540.5 253.5 L540.5 255.5 L538.5 255.5 L538.5 253.5M540.5 247.5 L533.5 255.5" stroke="#6e3048"/><path d="M593.5 177.5 L593.5 185.5M605.5 181.5 L599.5 181.5 L599.5 177.5 L605.5 177.5 L605.5 183.5 L603.5 185.5 L599.5 185.5M609.5 177.5 L615.5 177.5 L615.5 181.5 L609.5 181.5 L609.5 185.5 L615.5 185.5M619.5 183.5 L621.5 181.5 L623.5 183.5 L621.5 185.5 L619.5 183.5M629.5 177.5 L629.5 185.5M640.5 177.5 L634.5 177.5 L634.5 185.5 L640.5 185.5 L640.5 181.5 L634.5 181.5M650.5 177.5 L644.5 177.5 L644.5 185.5 L650.5 185.5 L650.5 181.5 L644.5 181.5M670.5 185.5 L664.5 185.5 L664.5 177.5 L670.5 177.5 L670.5 183.5 L667.0 183.5 L667.0 180.0 L669.0 180.0 L669.0 183.5M680.5 177.5 L686.5 177.5 L680.5 185.5M690.5 177.5 L696.5 177.5 L690.5 185.5M700.5 177.5 L702.5 177.5 L702.5 179.5 L700.5 179.5 L700.5 177.5M706.5 183.5 L708.5 183.5 L708.5 185.5 L706.5 185.5 L706.5 183.5M708.5 177.5 L701.5 185.5" stroke="#00ffff"/><path d="M577.5 178.5 L577.5 186.5M589.5 182.5 L583.5 182.5 L583.5 178.5 L589.5 178.5 L589.5 184.5 L587.5 186.5 L583.5 186.5M593.5 178.5 L597.5 178.5 L599.5 180.5 L599.5 186.5 L593.5 186.5 L593.5 178.5M603.5 184.5 L605.5 182.5 L607.5 184.5 L605.5 186.5 L603.5 184.5M611.5 178.5 L617.5 178.5 L617.5 186.5 L611.5 186.5 L611.5 178.5M611.5 182.5 L617.5 182.5M621.5 178.5 L627.5 178.5 L627.5 186.5 L621.5 186.5M627.5 182.5 L622.5 182.5M637.5 178.5 L631.5 178.5 L631.5 186.5 L637.5 186.5 L637.5 182.5 L631.5 182.5M657.5 186.5 L651.5 186.5 L651.5 178.5 L657.5 178.5 L657.5 184.5 L654.0 184.5 L654.0 181.0 L656.0 181.0 L656.0 184.5M667.5 178.5 L673.5 178.5 L667.5 186.5M683.5 178.5 L677.5 178.5 L677.5 186.5 L683.5 186.5 L683.5 182.5 L677.5 182.5M687.5 178.5 L689.5 178.5 L689.5 180.5 L687.5 180.5 L687.5 178.5M693.5 184.5 L695.5 184.5 L695.5 186.5 L693.5 186.5 L693.5 184.5M695.5 178.5 L688.5 186.5" stroke="#ffff00"/><path d="M574.5 170.5 L574.5 178.5M586.5 174.5 L580.5 174.5 L580.5 170.5 L586.5 170.5 L586.5 176.5 L584.5 178.5 L580.5 178.5M590.5 170.5 L594.5 170.5 L596.5 172.5 L596.5 178.5 L590.5 178.5 L590.5 170.5M600.5 176.5 L602.5 174.5 L604.5 176.5 L602.5 178.5 L600.5 176.5M608.5 170.5 L608.5 176.5 L614.5 176.5M612.5 170.5 L612.5 178.5M620.5 170.5 L620.5 178.5M626.5 170.5 L632.5 170.5 L632.5 178.5 L626.5 178.5M632.5 174.5 L627.5 174.5M652.5 178.5 L646.5 178.5 L646.5 170.5 L652.5 170.5 L652.5 176.5 L649.0 176.5 L649.0 173.0 L651.0 173.0 L651.0 176.5M662.5 170.5 L668.5 170.5 L662.5 178.5M672.5 170.5 L678.5 170.5 L678.5 178.5 L672.5 178.5 L672.5 170.5M672.5 174.5 L678.5 174.5M682.5 170.5 L684.5 170.5 L684.5 172.5 L682.5 172.5 L682.5 170.5M688.5 176.5 L690.5 176.5 L690.5 178.5 L688.5 178.5 L688.5 176.5M690.5 170.5 L683.5 178.5" stroke="#ff99ff"/><path d="M559 186.5H568" stroke="url(#lg2)"/><path d="M562 189.5H568" stroke="url(#lg3)"/><rect x="568.5" y="185.5" width="8" height="8" fill="#00ffff" stroke="#00ff00"/><rect x="553.5" y="186.5" width="8" height="8" fill="#ffff00" stroke="#00ff00"/><rect x="546.5" y="178.5" width="12" height="12" fill="#ff99ff" stroke="#00ff00"/><g shape-rendering="geometricPrecision" stroke="#8e8e8e" stroke-width="2" stroke-linecap="butt">
<path d="M797.4 24.8H804.8"/>
<path d="M820.4 24H827.6M824 20.2V27.6"/>
<path d="M843.8 20L850.6 26.8M850.6 20L843.8 26.8" stroke-width="2.1"/>
</g>
</svg>
</body></html>
